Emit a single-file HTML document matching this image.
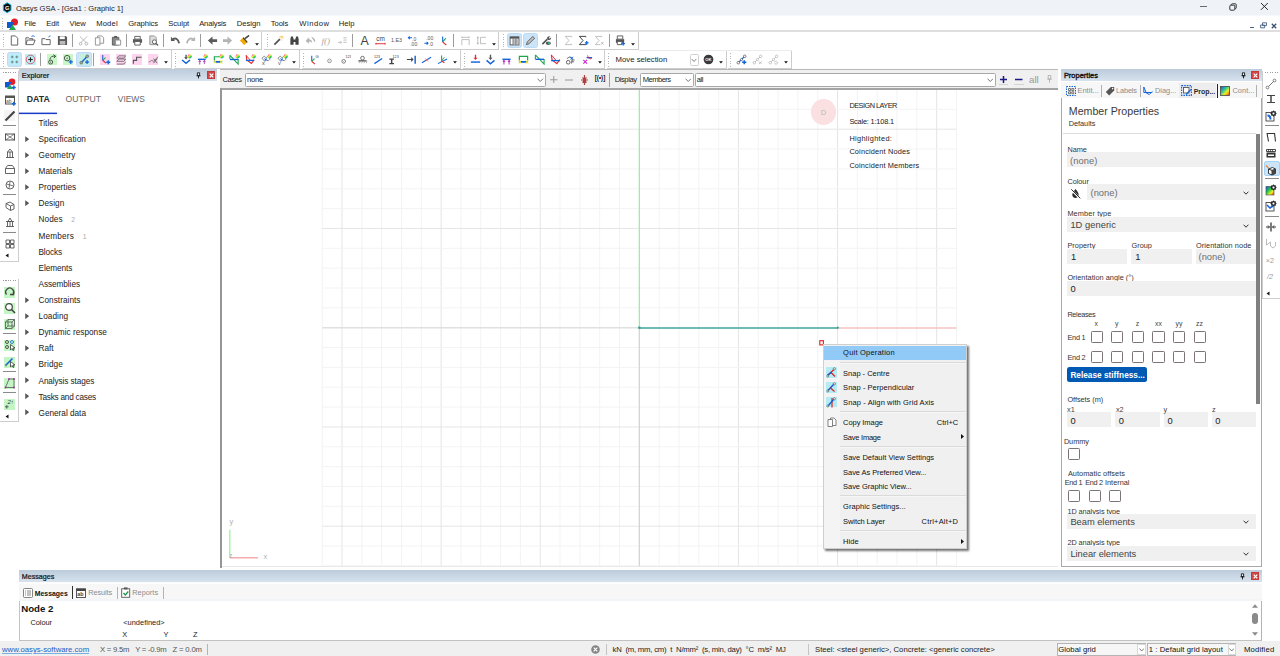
<!DOCTYPE html>
<html lang="en"><head><meta charset="utf-8"><title>Oasys GSA - [Gsa1 : Graphic 1]</title>
<style>
html,body{margin:0;padding:0;background:#fff;}
body{width:1280px;height:656px;position:relative;overflow:hidden;font-family:"Liberation Sans",sans-serif;}
.b{position:absolute;display:block;}
.t{position:absolute;display:block;white-space:nowrap;}
</style></head>
<body>
<svg width="0" height="0" style="position:absolute"><defs><linearGradient id="rb" x1="0" y1="0" x2="1" y2="1"><stop offset=".15" stop-color="#f4c"/><stop offset=".4" stop-color="#fe3"/><stop offset=".62" stop-color="#3d4"/><stop offset=".9" stop-color="#26f"/></linearGradient></defs></svg>
<!-- s_top -->
<div class="b" style="left:0.00px;top:0.00px;width:1280.00px;height:15.00px;background:#eff3f8;"></div>
<div class="b" style="left:0.00px;top:15.00px;width:1280.00px;height:1.00px;background:#f6f8fb;"></div>
<svg class="b" style="left:1.60px;top:2.20px;" width="10.4" height="11.4" viewBox="0 0 13 15"><path d="M6.500 1l5 3v7l-5 3-5-3v-7z" fill="#0a0a0a" stroke="#16b4e0" stroke-width="1.300"/><text x="6.500" y="10.300" font-size="7.500" font-weight="bold" text-anchor="middle" font-family="Liberation Sans,sans-serif" fill="#fff">G</text></svg>
<span class="t" style="left:16.00px;top:2.60px;font-size:7.57px;line-height:12px;height:12px;color:#1c1c1c;">Oasys GSA - [Gsa1 : Graphic 1]</span>
<div class="b" style="left:1199.80px;top:6.10px;width:7.40px;height:1.20px;background:#6a6a6a;"></div>
<svg class="b" style="left:1229.40px;top:2.60px;" width="8" height="8" viewBox="0 0 8 8"><rect x=".8" y="2.200" width="5" height="5" rx="1" fill="none" stroke="#333" stroke-width="1"/><path d="M2.400 2v-.4q0-.8 .8-.8h3.200q.8 0 .8 .8v3.200q0 .8-.8 .8h-.4" fill="none" stroke="#333" stroke-width="1"/></svg>
<svg class="b" style="left:1259.60px;top:2.00px;" width="8.8" height="8.8" viewBox="0 0 9 9"><path d="M1 1l7 7M8 1l-7 7" stroke="#222" stroke-width="1"/></svg>
<div class="b" style="left:0.00px;top:16.00px;width:1280.00px;height:14.50px;background:#fff;"></div>
<div class="b" style="left:0.00px;top:30.30px;width:1280.00px;height:1.60px;background:#dedede;"></div>
<div class="b" style="left:1.80px;top:18.00px;width:1.00px;height:11.00px;background:repeating-linear-gradient(#b4b4b4 0 1px,transparent 1px 2.5px);"></div>
<svg class="b" style="left:5.50px;top:17.50px;" width="13" height="13" viewBox="0 0 13 13"><circle cx="8.500" cy="4" r="3.500" fill="#e0202a"/><path d="M1 4h7l-3 6h-4z" fill="#1458d0"/><path d="M3 12l3.500-5.500 3.500 5.500z" fill="#1ea850"/></svg>
<span class="t" style="left:24.20px;top:17.90px;font-size:7.63px;line-height:12px;height:12px;color:#1a1a1a;letter-spacing:-0.174px;">File</span>
<span class="t" style="left:46.20px;top:17.90px;font-size:7.63px;line-height:12px;height:12px;color:#1a1a1a;letter-spacing:-0.087px;">Edit</span>
<span class="t" style="left:69.50px;top:17.90px;font-size:7.63px;line-height:12px;height:12px;color:#1a1a1a;letter-spacing:-0.026px;">View</span>
<span class="t" style="left:96.20px;top:17.90px;font-size:7.63px;line-height:12px;height:12px;color:#1a1a1a;letter-spacing:0.163px;">Model</span>
<span class="t" style="left:128.20px;top:17.90px;font-size:7.63px;line-height:12px;height:12px;color:#1a1a1a;letter-spacing:-0.092px;">Graphics</span>
<span class="t" style="left:168.20px;top:17.90px;font-size:7.63px;line-height:12px;height:12px;color:#1a1a1a;letter-spacing:-0.035px;">Sculpt</span>
<span class="t" style="left:199.20px;top:17.90px;font-size:7.63px;line-height:12px;height:12px;color:#1a1a1a;letter-spacing:-0.177px;">Analysis</span>
<span class="t" style="left:236.80px;top:17.90px;font-size:7.63px;line-height:12px;height:12px;color:#1a1a1a;letter-spacing:-0.009px;">Design</span>
<span class="t" style="left:270.80px;top:17.90px;font-size:7.63px;line-height:12px;height:12px;color:#1a1a1a;letter-spacing:-0.083px;">Tools</span>
<span class="t" style="left:299.20px;top:17.90px;font-size:7.63px;line-height:12px;height:12px;color:#1a1a1a;letter-spacing:0.526px;">Window</span>
<span class="t" style="left:338.80px;top:17.90px;font-size:7.63px;line-height:12px;height:12px;color:#1a1a1a;letter-spacing:0.001px;">Help</span>
<div class="b" style="left:1250.00px;top:26.60px;width:4.20px;height:1.10px;background:#4a6080;"></div>
<svg class="b" style="left:1259.60px;top:22.00px;" width="7" height="6.5" viewBox="0 0 7 6.500"><path d="M2.500 .8h4v2.800h-4zM.6 3h4v2.800h-4z" fill="#fff" stroke="#4a6080" stroke-width=".9"/></svg>
<svg class="b" style="left:1271.40px;top:22.80px;" width="6" height="6" viewBox="0 0 6 6"><path d="M.8 .8l4.400 4.400M5.200 .8l-4.400 4.400" stroke="#3a5070" stroke-width="1.300"/></svg>
<div class="b" style="left:0.00px;top:31.60px;width:1280.00px;height:38.40px;background:#fff;"></div>
<div class="b" style="left:0.00px;top:31.60px;width:262.00px;height:18.20px;background:#fff;border-right:1px solid #cdcdcd;border-bottom:1px solid #cdcdcd;box-sizing:border-box;"></div>
<div class="b" style="left:264.00px;top:31.60px;width:235.00px;height:18.20px;background:#fff;border-right:1px solid #cdcdcd;border-bottom:1px solid #cdcdcd;box-sizing:border-box;"></div>
<div class="b" style="left:501.00px;top:31.60px;width:138.00px;height:18.20px;background:#fff;border-right:1px solid #cdcdcd;border-bottom:1px solid #cdcdcd;box-sizing:border-box;"></div>
<div class="b" style="left:0.00px;top:50.00px;width:172.00px;height:19.00px;background:#fff;border-right:1px solid #cdcdcd;border-bottom:1px solid #cdcdcd;box-sizing:border-box;"></div>
<div class="b" style="left:173.50px;top:50.00px;width:126.30px;height:19.00px;background:#fff;border-right:1px solid #cdcdcd;border-bottom:1px solid #cdcdcd;box-sizing:border-box;"></div>
<div class="b" style="left:301.50px;top:50.00px;width:159.00px;height:19.00px;background:#fff;border-right:1px solid #cdcdcd;border-bottom:1px solid #cdcdcd;box-sizing:border-box;"></div>
<div class="b" style="left:462.50px;top:50.00px;width:142.80px;height:19.00px;background:#fff;border-right:1px solid #cdcdcd;border-bottom:1px solid #cdcdcd;box-sizing:border-box;"></div>
<div class="b" style="left:606.80px;top:50.00px;width:119.80px;height:19.00px;background:#fff;border-right:1px solid #cdcdcd;border-bottom:1px solid #cdcdcd;box-sizing:border-box;"></div>
<div class="b" style="left:728.20px;top:50.00px;width:64.00px;height:19.00px;background:#fff;border-right:1px solid #cdcdcd;border-bottom:1px solid #cdcdcd;box-sizing:border-box;"></div>
<div class="b" style="left:639.00px;top:49.60px;width:153.20px;height:0.80px;background:#ececec;"></div>
<div class="b" style="left:2.50px;top:34.00px;width:1.00px;height:14.00px;background:repeating-linear-gradient(#b4b4b4 0 1px,transparent 1px 2.5px);"></div>
<svg class="b" style="left:9.00px;top:35.10px;" width="11" height="11" viewBox="0 0 12 12"><path d="M2.5 1h4.5l2.5 2.5v7.5h-7z" fill="#fff" stroke="#5a5a5a" stroke-width="1"/></svg>
<svg class="b" style="left:25.00px;top:35.10px;" width="11" height="11" viewBox="0 0 12 12"><path d="M1 10.5l1.5-5h8.5l-1.8 5zM1 10V3h3l1 1h3.5v1.5" fill="#fff" stroke="#5a5a5a" stroke-width="1"/><path d="M7 1.5q2-1.5 3.5.3" stroke="#1464dc" fill="none"/></svg>
<svg class="b" style="left:41.00px;top:35.10px;" width="11" height="11" viewBox="0 0 12 12"><path d="M1 4h3.5l1 1H10v5.5H1z" fill="#fff" stroke="#5a5a5a" stroke-width="1"/><path d="M8.5 2.5q0-1.500 1.800-1.5" stroke="#1464dc" fill="none"/></svg>
<svg class="b" style="left:57.00px;top:35.10px;" width="11" height="11" viewBox="0 0 12 12"><path d="M1 1h8.500l1.500 1.500v8.500h-10z" fill="#5a5a5a"/><rect x="3" y="1.5" width="5.5" height="3" fill="#fff"/><rect x="3" y="6.500" width="6" height="4" fill="#bbb"/></svg>
<div class="b" style="left:72.00px;top:34.10px;width:1.00px;height:13.00px;background:#9c9c9c;"></div>
<svg class="b" style="left:78.00px;top:35.10px;" width="11" height="11" viewBox="0 0 12 12"><path d="M2 1.500l7 7M10 1.500l-7 7" stroke="#b4b4b4" stroke-width="1" fill="none"/><circle cx="2.8" cy="9.500" r="1.500" fill="none" stroke="#b4b4b4"/><circle cx="9.200" cy="9.500" r="1.500" fill="none" stroke="#b4b4b4"/></svg>
<svg class="b" style="left:94.00px;top:35.10px;" width="11" height="11" viewBox="0 0 12 12"><path d="M1.5 3h5v8h-5zM4 3V1h4.500l2 2v6h-4" fill="#fff" stroke="#909090" stroke-width="1"/></svg>
<svg class="b" style="left:110.50px;top:35.10px;" width="11" height="11" viewBox="0 0 12 12"><path d="M1.500 2.500h7v8.500h-7z" fill="#888" stroke="#5a5a5a"/><rect x="3.500" y="1" width="3" height="2" fill="#5a5a5a"/><path d="M5 5.500h5.500v5.500h-5.500z" fill="#fff" stroke="#909090"/></svg>
<div class="b" style="left:125.50px;top:34.10px;width:1.00px;height:13.00px;background:#9c9c9c;"></div>
<svg class="b" style="left:131.50px;top:35.10px;" width="11" height="11" viewBox="0 0 12 12"><path d="M1 4.500h10v4h-10z" fill="#5a5a5a"/><path d="M3 1.500h6v3h-6zM3 7h6v4h-6z" fill="#fff" stroke="#5a5a5a"/></svg>
<svg class="b" style="left:147.50px;top:35.10px;" width="11" height="11" viewBox="0 0 12 12"><path d="M2 1h5l2 2v7.500h-7z" fill="#ddd" stroke="#909090"/><circle cx="7" cy="7.500" r="2.200" fill="#fff" stroke="#5a5a5a"/><path d="M8.700 9.200l2.300 2.300" stroke="#5a5a5a" stroke-width="1.300"/></svg>
<div class="b" style="left:163.00px;top:34.10px;width:1.00px;height:13.00px;background:#9c9c9c;"></div>
<svg class="b" style="left:169.50px;top:35.10px;" width="11" height="11" viewBox="0 0 12 12"><path d="M1 2v4.500h4.500z" fill="#5a5a5a"/><path d="M3 4.500q5-2.500 7 4.500" stroke="#5a5a5a" stroke-width="2" fill="none"/></svg>
<svg class="b" style="left:185.00px;top:35.10px;" width="11" height="11" viewBox="0 0 12 12"><path d="M11 2v4.500h-4.500z" fill="#b4b4b4"/><path d="M9 4.500q-5-2.500-7 4.500" stroke="#b4b4b4" stroke-width="2" fill="none"/></svg>
<div class="b" style="left:200.00px;top:34.10px;width:1.00px;height:13.00px;background:#9c9c9c;"></div>
<svg class="b" style="left:206.50px;top:35.10px;" width="11" height="11" viewBox="0 0 12 12"><path d="M1 6l5-4.500v3h5v3h-5v3z" fill="#5a5a5a"/></svg>
<svg class="b" style="left:222.00px;top:35.10px;" width="11" height="11" viewBox="0 0 12 12"><path d="M11 6l-5-4.500v3h-5v3h5v3z" fill="#b4b4b4"/></svg>
<svg class="b" style="left:238.50px;top:35.10px;" width="11" height="11" viewBox="0 0 12 12"><path d="M1 6l4-3.500 4.500 5-4 3.500z" fill="#f5a800"/><path d="M6.500 4l4.500-3.500" stroke="#444" stroke-width="1.800"/><path d="M4.500 3l4.500 5" stroke="#444" stroke-width="1.300"/></svg>
<svg class="b" style="left:252.50px;top:37.60px;" width="8" height="8" viewBox="0 0 12 12"><path d="M3.200 7.800h5.600l-2.800 3.400z" fill="#111"/></svg>
<div class="b" style="left:267.00px;top:34.00px;width:1.00px;height:14.00px;background:repeating-linear-gradient(#b4b4b4 0 1px,transparent 1px 2.5px);"></div>
<svg class="b" style="left:273.00px;top:35.10px;" width="11" height="11" viewBox="0 0 12 12"><path d="M1.500 10.500l6-6" stroke="#555" stroke-width="2"/><path d="M9 1v2M9 5v1M7 3.300h1M10 3.300h1.500M10 2l1-1M7.500 1.500l.7.700" stroke="#f5a800" stroke-width=".9"/></svg>
<svg class="b" style="left:289.00px;top:35.10px;" width="11" height="11" viewBox="0 0 12 12"><path d="M1.500 3.500h3.500v7h-3.500zM7 3.500h3.500v7h-3.500zM5 5h2v2.500h-2zM2 1.500h2.500v2h-2.500zM7.500 1.500h2.500v2h-2.500z" fill="#444"/></svg>
<svg class="b" style="left:305.00px;top:35.10px;" width="11" height="11" viewBox="0 0 12 12"><path d="M1 6.500l3-3.500v2q3-.5 3.500 3-1.500-1.500-3.500-1v2zM7 2.500q4 .5 4 5l-1.500-1.500" fill="#b4b4b4" stroke="#b4b4b4" stroke-width=".6"/></svg>
<svg class="b" style="left:321.00px;top:35.10px;" width="11" height="11" viewBox="0 0 12 12"><text x="0.500" y="9.500" font-size="10" font-style="italic" font-family="Liberation Serif,serif" fill="#a8a8a8">f()</text></svg>
<svg class="b" style="left:337.00px;top:35.10px;" width="11" height="11" viewBox="0 0 12 12"><path d="M1 8h4M3.500 6.500l1.500 1.500-1.500 1.500" fill="none" stroke="#b4b4b4" stroke-width=".9"/><path d="M7 3h3.500M7 5.500h3.500M7 8h3.500" stroke="#b4b4b4" stroke-width=".9"/></svg>
<div class="b" style="left:352.00px;top:34.10px;width:1.00px;height:13.00px;background:#9c9c9c;"></div>
<svg class="b" style="left:358.50px;top:35.10px;" width="11" height="11" viewBox="0 0 12 12"><text x="6" y="11" font-size="13.500" text-anchor="middle" font-family="Liberation Sans,sans-serif" fill="#444">A</text></svg>
<svg class="b" style="left:374.50px;top:35.10px;" width="11" height="11" viewBox="0 0 12 12"><text x="6" y="6.500" font-size="7" text-anchor="middle" font-family="Liberation Sans,sans-serif" fill="#444">cm</text><path d="M1 9.500h10M1 8.500v2M11 8.500v2" stroke="#e0282e" stroke-width="1"/></svg>
<svg class="b" style="left:390.50px;top:35.10px;" width="11" height="11" viewBox="0 0 12 12"><text x="6" y="8" font-size="5.800" text-anchor="middle" font-family="Liberation Sans,sans-serif" fill="#555">1.E3</text></svg>
<svg class="b" style="left:406.50px;top:35.10px;" width="11" height="11" viewBox="0 0 12 12"><path d="M1.500 3h4M3 1.500l-1.500 1.500 1.500 1.500" fill="none" stroke="#1464dc" stroke-width="1.100"/><text x="5.500" y="6" font-size="5.500" font-family="Liberation Sans,sans-serif" fill="#555">.0</text><text x="3.500" y="11.500" font-size="5.500" font-family="Liberation Sans,sans-serif" fill="#555">.00</text></svg>
<svg class="b" style="left:422.50px;top:35.10px;" width="11" height="11" viewBox="0 0 12 12"><path d="M1.500 9h4M4 7.500l1.500 1.500-1.500 1.500" fill="none" stroke="#1464dc" stroke-width="1.100"/><text x="3.500" y="5.500" font-size="5.500" font-family="Liberation Sans,sans-serif" fill="#555">.00</text><text x="6.500" y="11.500" font-size="5.500" font-family="Liberation Sans,sans-serif" fill="#555">.0</text></svg>
<svg class="b" style="left:438.50px;top:35.10px;" width="11" height="11" viewBox="0 0 12 12"><path d="M4 1.500v6" stroke="#1464dc" stroke-width="1.200"/><path d="M4 7.500l3.500-4" stroke="#1ea84e" stroke-width="1.200"/><path d="M4 7.500l4 3.500" stroke="#e0282e" stroke-width="1.300"/></svg>
<div class="b" style="left:453.20px;top:34.10px;width:1.00px;height:13.00px;background:#9c9c9c;"></div>
<svg class="b" style="left:460.00px;top:35.10px;" width="11" height="11" viewBox="0 0 12 12"><path d="M2 5h8v6M2 5v6M2 2.500h8M2 1.500v2M10 1.500v2" fill="none" stroke="#b4b4b4" stroke-width=".9"/></svg>
<svg class="b" style="left:475.50px;top:35.10px;" width="11" height="11" viewBox="0 0 12 12"><path d="M5 2.500h6M5 9.500h6M5 2.500v7M2 2v8M1 3.500l1-1.500 1 1.500M1 8.500l1 1.500 1-1.500" fill="none" stroke="#b4b4b4" stroke-width=".9"/></svg>
<svg class="b" style="left:489.70px;top:37.60px;" width="8" height="8" viewBox="0 0 12 12"><path d="M3.200 7.800h5.600l-2.800 3.400z" fill="#111"/></svg>
<div class="b" style="left:503.00px;top:34.00px;width:1.00px;height:14.00px;background:repeating-linear-gradient(#b4b4b4 0 1px,transparent 1px 2.5px);"></div>
<div class="b" style="left:506.80px;top:32.90px;width:15.40px;height:15.40px;background:#cce4f7;border:1px solid #bcdcf6;border-radius:2.500px;box-sizing:border-box;"></div>
<div class="b" style="left:522.80px;top:32.90px;width:15.40px;height:15.40px;background:#cce4f7;border:1px solid #bcdcf6;border-radius:2.500px;box-sizing:border-box;"></div>
<svg class="b" style="left:509.00px;top:35.10px;" width="11" height="11" viewBox="0 0 12 12"><rect x="1.200" y="2" width="9.600" height="8.800" fill="#fff" stroke="#555" stroke-width="1"/><rect x="1.200" y="2" width="9.600" height="2" fill="#555"/><rect x="4.300" y="4.500" width="6" height="5.800" fill="#bdbdbd"/><path d="M4.300 4v7M7.500 4v7" stroke="#666" stroke-width=".8"/></svg>
<svg class="b" style="left:525.00px;top:35.10px;" width="11" height="11" viewBox="0 0 12 12"><path d="M1.500 10.500l1-3 6-6 2 2-6 6z" fill="#bbb" stroke="#555" stroke-width=".9"/></svg>
<svg class="b" style="left:541.00px;top:35.10px;" width="11" height="11" viewBox="0 0 12 12"><path d="M1.500 10l5.500-5.500" stroke="#555" stroke-width="1.800"/><path d="M6.500 3.500a2.500 2.500 0 0 1 3.500-2l-1.500 1.500 1 1 1.500-1.500a2.500 2.500 0 0 1-3 3z" fill="#555"/><ellipse cx="8" cy="9" rx="2.800" ry="2" fill="#555"/><circle cx="8.800" cy="9" r="1.200" fill="#2c8"/></svg>
<div class="b" style="left:555.50px;top:34.10px;width:1.00px;height:13.00px;background:#9c9c9c;"></div>
<svg class="b" style="left:562.50px;top:35.10px;" width="11" height="11" viewBox="0 0 12 12"><path d="M9.500 2.500v-1h-7l4 4.500-4 4.500h7v-1" fill="none" stroke="#b4b4b4" stroke-width=".9"/></svg>
<svg class="b" style="left:578.30px;top:35.10px;" width="11" height="11" viewBox="0 0 12 12"><path d="M8.500 2.500v-1h-7l4 4.500-4 4.500h7v-1" fill="none" stroke="#333" stroke-width="1"/><path d="M7.5 8.5h4M9.5 6.5v4" stroke="#1464dc" stroke-width="1.4" fill="none"/></svg>
<svg class="b" style="left:594.00px;top:35.10px;" width="11" height="11" viewBox="0 0 12 12"><path d="M8.500 2.500v-1h-7l4 4.500-4 4.500h5" fill="none" stroke="#b4b4b4" stroke-width=".9"/><path d="M7.500 7.500l3 3M10.500 7.500l-3 3" stroke="#b4b4b4" stroke-width=".9"/></svg>
<div class="b" style="left:609.10px;top:34.10px;width:1.00px;height:13.00px;background:#9c9c9c;"></div>
<svg class="b" style="left:615.00px;top:35.10px;" width="11" height="11" viewBox="0 0 12 12"><path d="M1 4.500h9v4h-9z" fill="#555"/><path d="M2.500 1h6v3.500h-6zM2.500 7h5v3.500h-5z" fill="#fff" stroke="#555"/><path d="M7 9.5h4M9 7.5v4" stroke="#1464dc" stroke-width="1.4" fill="none"/></svg>
<svg class="b" style="left:629.30px;top:37.60px;" width="8" height="8" viewBox="0 0 12 12"><path d="M3.200 7.800h5.600l-2.800 3.400z" fill="#111"/></svg>
<div class="b" style="left:2.50px;top:52.50px;width:1.00px;height:14.00px;background:repeating-linear-gradient(#b4b4b4 0 1px,transparent 1px 2.5px);"></div>
<div class="b" style="left:6.80px;top:51.70px;width:15.40px;height:15.40px;background:#cce4f7;border:1px solid #bcdcf6;border-radius:2.500px;box-sizing:border-box;"></div>
<div class="b" style="left:76.30px;top:51.70px;width:15.40px;height:15.40px;background:#cce4f7;border:1px solid #bcdcf6;border-radius:2.500px;box-sizing:border-box;"></div>
<div class="b" style="left:9.10px;top:54.10px;width:10.80px;height:10.60px;background:#b8f0f8;"></div><svg class="b" style="left:9.00px;top:53.90px;" width="11" height="11" viewBox="0 0 12 12"><path d="M2 3.200h3M3.500 1.700v3M7 3.200h3M8.500 1.700v3M2 8.700h3M3.500 7.200v3M7 8.700h3M8.500 7.200v3" stroke="#5a6a6a" stroke-width=".8"/></svg>
<div class="b" style="left:25.10px;top:54.10px;width:10.80px;height:10.60px;background:#b8f0f8;"></div><svg class="b" style="left:25.00px;top:53.90px;" width="11" height="11" viewBox="0 0 12 12"><circle cx="6" cy="6" r="4.700" fill="none" stroke="#e25060" stroke-width="1"/><path d="M3.500 6h5M6 3.500v5" stroke="#222" stroke-width="1.200"/></svg>
<div class="b" style="left:39.50px;top:52.90px;width:1.00px;height:13.00px;background:#9c9c9c;"></div>
<div class="b" style="left:46.60px;top:54.10px;width:10.80px;height:10.60px;background:#c8f8c8;"></div><svg class="b" style="left:46.50px;top:53.90px;" width="11" height="11" viewBox="0 0 12 12"><circle cx="4" cy="8.800" r="2.200" fill="none" stroke="#333" stroke-width=".9"/><circle cx="4" cy="8.800" r=".6" fill="#333"/><path d="M3 6q1-4.500 6-3.500M7 .8l2.500 1.700-2 2" fill="none" stroke="#333" stroke-width=".9"/></svg>
<div class="b" style="left:62.60px;top:54.10px;width:10.80px;height:10.60px;background:#c8f8c8;"></div><svg class="b" style="left:62.50px;top:53.90px;" width="11" height="11" viewBox="0 0 12 12"><circle cx="4.500" cy="4.500" r="3" fill="none" stroke="#333" stroke-width=".9"/><circle cx="4.500" cy="4.500" r=".7" fill="#333"/><path d="M6.2 8.5h4.6M8.5 6.2v4.6" stroke="#1464dc" stroke-width="1.4" fill="none"/></svg>
<div class="b" style="left:78.60px;top:54.10px;width:10.80px;height:10.60px;background:#c4f0e0;"></div><svg class="b" style="left:78.50px;top:53.90px;" width="11" height="11" viewBox="0 0 12 12"><path d="M3 9l5.500-6" stroke="#1464dc" stroke-width="1.500"/><circle cx="2.500" cy="9.500" r="1.500" fill="#9ab09a" stroke="#666" stroke-width=".8"/><circle cx="9" cy="2.500" r="1.500" fill="#9ab09a" stroke="#666" stroke-width=".8"/><path d="M6.6 8.8h4.4M8.8 6.6v4.4" stroke="#1464dc" stroke-width="1.4" fill="none"/></svg>
<div class="b" style="left:93.00px;top:52.90px;width:1.00px;height:13.00px;background:#9c9c9c;"></div>
<div class="b" style="left:99.60px;top:54.10px;width:10.80px;height:10.60px;background:#fdd4ee;"></div><svg class="b" style="left:99.50px;top:53.90px;" width="11" height="11" viewBox="0 0 12 12"><path d="M3 1v6" stroke="#1464dc" stroke-width="1.200"/><path d="M3 7l3-3" stroke="#1ea84e" stroke-width="1.200"/><path d="M3 7l3.500 3" stroke="#e0282e" stroke-width="1.300"/><path d="M6.8 9h4.4M9 6.8v4.4" stroke="#1464dc" stroke-width="1.4" fill="none"/></svg>
<div class="b" style="left:115.60px;top:54.10px;width:10.80px;height:10.60px;background:#fdd4ee;"></div><svg class="b" style="left:115.50px;top:53.90px;" width="11" height="11" viewBox="0 0 12 12"><path d="M3 2h7.500l-2 2.500h-7.500zM3 5.500h7.500l-2 2.500h-7.500zM1 11h7.500l2-2.500" fill="none" stroke="#555" stroke-width=".8"/></svg>
<div class="b" style="left:131.60px;top:54.10px;width:10.80px;height:10.60px;background:#fdd4ee;"></div><svg class="b" style="left:131.50px;top:53.90px;" width="11" height="11" viewBox="0 0 12 12"><path d="M1.500 10.500v-3.500h3.500v-3.500h5.500" fill="none" stroke="#555" stroke-width="1.200"/></svg>
<div class="b" style="left:147.60px;top:54.10px;width:10.80px;height:10.60px;background:#fdd4ee;"></div><svg class="b" style="left:147.50px;top:53.90px;" width="11" height="11" viewBox="0 0 12 12"><path d="M1 9l3-2 2 1 5-5" fill="none" stroke="#777" stroke-width="1"/><path d="M6 5l4 5M10 5l-4 5" stroke="#555" stroke-width=".9"/></svg>
<svg class="b" style="left:161.50px;top:56.40px;" width="8" height="8" viewBox="0 0 12 12"><path d="M3.200 7.800h5.600l-2.800 3.400z" fill="#111"/></svg>
<div class="b" style="left:175.20px;top:52.50px;width:1.00px;height:14.00px;background:repeating-linear-gradient(#b4b4b4 0 1px,transparent 1px 2.5px);"></div>
<svg class="b" style="left:180.50px;top:53.90px;" width="11" height="11" viewBox="0 0 12 12"><path d="M5.500 .8v3.500" stroke="#555" stroke-width="1.500"/><path d="M3.300 3.600h4.400l-2.200 2.400z" fill="#555"/><path d="M1.200 6.500l4.300 3.700 4.300-3.700" fill="none" stroke="#1464dc" stroke-width="1.600"/><circle cx="9.4" cy="2.7" r="2.3" fill="url(#rb)"/></svg>
<svg class="b" style="left:196.50px;top:53.90px;" width="11" height="11" viewBox="0 0 12 12"><path d="M1 5.800h8.500" stroke="#1464dc" stroke-width="1.500"/><path d="M3 7v4.500M8 7v4M1.800 8.500l1.200-1.500 1.200 1.500M6.800 8.500l1.200-1.500 1.200 1.500" fill="none" stroke="#a3a" stroke-width="1"/><circle cx="9.4" cy="2.7" r="2.3" fill="url(#rb)"/></svg>
<svg class="b" style="left:212.50px;top:53.90px;" width="11" height="11" viewBox="0 0 12 12"><path d="M1.500 7v-4h6.500" fill="none" stroke="#1ea84e" stroke-width="1.300"/><path d="M1 8.500h9" stroke="#1464dc" stroke-width="1.700"/><path d="M1 6.800l2.500 3.600M3.500 6.800l-2.500 3.600M7.500 6.800l2.500 3.600M10 6.800l-2.500 3.600" stroke="#ee2" stroke-width="1"/><path d="M3.800 8.500h3.400" stroke="#1464dc" stroke-width="1.700"/><circle cx="9.4" cy="2.7" r="2.3" fill="url(#rb)"/></svg>
<svg class="b" style="left:228.50px;top:53.90px;" width="11" height="11" viewBox="0 0 12 12"><path d="M1 1.500l9 9.500v-5.500" fill="none" stroke="#1ea84e" stroke-width="1.200"/><path d="M1 1.500v4" stroke="#1ea84e" stroke-width="1.200"/><path d="M1 6h9" stroke="#1464dc" stroke-width="1.500"/><circle cx="9.4" cy="2.7" r="2.3" fill="url(#rb)"/></svg>
<svg class="b" style="left:244.50px;top:53.90px;" width="11" height="11" viewBox="0 0 12 12"><path d="M1.300 1.500l.7 5 5 3.800 3-4" fill="none" stroke="#e0282e" stroke-width="1.200"/><path d="M1.300 1.500l5 6" stroke="#e0282e" stroke-width="1"/><path d="M1 7h9" stroke="#1464dc" stroke-width="1.500"/><circle cx="9.4" cy="2.7" r="2.3" fill="url(#rb)"/></svg>
<svg class="b" style="left:260.50px;top:53.90px;" width="11" height="11" viewBox="0 0 12 12"><path d="M1 4.500l2.500-2 2 1.500 2.500-1.500 2 3-2 2-2-1-2 1.500z" fill="none" stroke="#666" stroke-width=".8"/><path d="M3.500 5l3.500 2M6 4.500l-2 3" stroke="#1464dc" stroke-width=".9"/><text x="1" y="12" font-size="6" font-family="Liberation Sans,sans-serif" fill="#444">x</text><circle cx="9.4" cy="2.7" r="2.3" fill="url(#rb)"/></svg>
<svg class="b" style="left:276.50px;top:53.90px;" width="11" height="11" viewBox="0 0 12 12"><path d="M1 4.500l2.500-2 2 1.500 2.500-1.500 2 3-2 2-2-1-2 1.500z" fill="none" stroke="#666" stroke-width=".8"/><path d="M3.500 5l3.500 2M6 4.500l-2 3" stroke="#1464dc" stroke-width=".9"/><text x="1" y="11.500" font-size="6" font-family="Liberation Sans,sans-serif" fill="#444">y</text><circle cx="9.4" cy="2.7" r="2.3" fill="url(#rb)"/></svg>
<svg class="b" style="left:290.00px;top:56.40px;" width="8" height="8" viewBox="0 0 12 12"><path d="M3.200 7.800h5.600l-2.800 3.400z" fill="#111"/></svg>
<div class="b" style="left:303.00px;top:52.50px;width:1.00px;height:14.00px;background:repeating-linear-gradient(#b4b4b4 0 1px,transparent 1px 2.5px);"></div>
<svg class="b" style="left:308.90px;top:53.90px;" width="11" height="11" viewBox="0 0 12 12"><path d="M3 2v6" stroke="#1464dc" stroke-width="1.200"/><path d="M3 8l3-3" stroke="#1ea84e" stroke-width="1.200"/><path d="M3 8l3.500 3" stroke="#e0282e" stroke-width="1.300"/><text x="7" y="4.500" font-size="4.500" font-family="Liberation Sans,sans-serif" fill="#333">G</text></svg>
<svg class="b" style="left:323.90px;top:53.90px;" width="11" height="11" viewBox="0 0 12 12"><circle cx="6" cy="7.500" r="2" fill="none" stroke="#777" stroke-width=".8"/><circle cx="6" cy="7.500" r=".5" fill="#777"/></svg>
<svg class="b" style="left:340.10px;top:53.90px;" width="11" height="11" viewBox="0 0 12 12"><circle cx="4" cy="8" r="2" fill="none" stroke="#555" stroke-width=".8"/><circle cx="4" cy="8" r=".5" fill="#555"/><text x="6" y="4.500" font-size="4" font-family="Liberation Sans,sans-serif" fill="#444">123</text></svg>
<svg class="b" style="left:357.00px;top:53.90px;" width="11" height="11" viewBox="0 0 12 12"><circle cx="6" cy="4.500" r="2" fill="none" stroke="#555" stroke-width=".9"/><path d="M1.500 7.500h9" stroke="#444" stroke-width="1.300"/><path d="M2.500 10l1-2M5 10l1-2M7.500 10l1-2M10 10l1-2" stroke="#888" stroke-width=".7"/></svg>
<svg class="b" style="left:373.30px;top:53.90px;" width="11" height="11" viewBox="0 0 12 12"><path d="M1.500 10.500l8.500-5.500" stroke="#1464dc" stroke-width="1.300"/><text x="1" y="4" font-size="4" font-family="Liberation Sans,sans-serif" fill="#444">123</text></svg>
<svg class="b" style="left:388.30px;top:53.90px;" width="11" height="11" viewBox="0 0 12 12"><path d="M1.500 5.500h5M1.500 10.500h5" stroke="#444" stroke-width="1.300"/><path d="M4 5.500v5" stroke="#444" stroke-width="1.600"/><text x="5" y="4" font-size="4" font-family="Liberation Sans,sans-serif" fill="#444">123</text></svg>
<svg class="b" style="left:406.10px;top:53.90px;" width="11" height="11" viewBox="0 0 12 12"><path d="M1 6h6.500M5.500 4l2 2-2 2" fill="none" stroke="#444" stroke-width="1.100"/><path d="M10 2v8.500" stroke="#1464dc" stroke-width="1.600"/></svg>
<svg class="b" style="left:421.00px;top:53.90px;" width="11" height="11" viewBox="0 0 12 12"><path d="M1 9.500l10-6" stroke="#1464dc" stroke-width="1.200"/><path d="M5 5l2.500 3M7.500 5l-2.500 3" stroke="#e66" stroke-width=".9"/></svg>
<svg class="b" style="left:437.00px;top:53.90px;" width="11" height="11" viewBox="0 0 12 12"><path d="M5 1.500v6" stroke="#1ea84e" stroke-width="1.200"/><path d="M5 7.500l3-4" stroke="#1ea84e" stroke-width="1"/><path d="M1 10.500l10-5" stroke="#1464dc" stroke-width="1.200"/><path d="M5 7.500l3 2" stroke="#e0282e" stroke-width="1.200"/></svg>
<svg class="b" style="left:451.00px;top:56.40px;" width="8" height="8" viewBox="0 0 12 12"><path d="M3.200 7.800h5.600l-2.800 3.400z" fill="#111"/></svg>
<div class="b" style="left:464.00px;top:52.50px;width:1.00px;height:14.00px;background:repeating-linear-gradient(#b4b4b4 0 1px,transparent 1px 2.5px);"></div>
<svg class="b" style="left:469.50px;top:53.90px;" width="11" height="11" viewBox="0 0 12 12"><path d="M6 .8v4" stroke="#e0282e" stroke-width="1.400"/><path d="M3.800 4.200h4.400l-2.200 2.400z" fill="#e0282e"/><path d="M1 8.800h10" stroke="#1464dc" stroke-width="1.600"/></svg>
<svg class="b" style="left:485.10px;top:53.90px;" width="11" height="11" viewBox="0 0 12 12"><path d="M6 .8v4" stroke="#555" stroke-width="1.500"/><path d="M3.800 4.200h4.400l-2.200 2.400z" fill="#555"/><path d="M1.700 7l4.300 3.700 4.300-3.700" fill="none" stroke="#1464dc" stroke-width="1.600"/></svg>
<svg class="b" style="left:501.40px;top:53.90px;" width="11" height="11" viewBox="0 0 12 12"><path d="M1.500 5.800h9" stroke="#1464dc" stroke-width="1.600"/><path d="M3.200 7v4.500M8.800 7v4.500M2 8.500l1.200-1.500 1.200 1.500M7.600 8.500l1.200-1.500 1.200 1.500" fill="none" stroke="#b3b" stroke-width="1.100"/></svg>
<svg class="b" style="left:518.30px;top:53.90px;" width="11" height="11" viewBox="0 0 12 12"><path d="M1.500 7v-4.500h9v4.500" fill="none" stroke="#1ea84e" stroke-width="1.300"/><path d="M1 8.500h10" stroke="#1464dc" stroke-width="1.700"/><path d="M1 6.800l2.500 3.800M3.500 6.800l-2.500 3.800M8.500 6.800l2.500 3.800M11 6.800l-2.500 3.800" stroke="#ee2" stroke-width="1"/><path d="M3.800 8.500h4.400" stroke="#1464dc" stroke-width="1.700"/></svg>
<svg class="b" style="left:534.30px;top:53.90px;" width="11" height="11" viewBox="0 0 12 12"><path d="M1.500 1l9.500 10v-5.500" fill="none" stroke="#1ea84e" stroke-width="1.200"/><path d="M1.500 1v4.500" stroke="#1ea84e" stroke-width="1.200"/><path d="M1.500 5.800h9.500" stroke="#1464dc" stroke-width="1.500"/></svg>
<svg class="b" style="left:550.10px;top:53.90px;" width="11" height="11" viewBox="0 0 12 12"><path d="M1.500 1l.8 5.500 5.200 4 3.300-4.300" fill="none" stroke="#e0282e" stroke-width="1.200"/><path d="M1.500 1l5.500 6.500" stroke="#e0282e" stroke-width="1"/><path d="M1.200 7.200h9.600" stroke="#1464dc" stroke-width="1.500"/></svg>
<svg class="b" style="left:565.10px;top:53.90px;" width="11" height="11" viewBox="0 0 12 12"><circle cx="3.500" cy="9" r="2" fill="none" stroke="#444" stroke-width=".9"/><path d="M2 5q3-3 6-1M7 6.500h3.500M7 8.500h3M8 5.500l-1 5" fill="none" stroke="#444" stroke-width=".8"/><path d="M5 3.500l4 2M9 3l-3 3" stroke="#1464dc" stroke-width=".9"/></svg>
<svg class="b" style="left:582.00px;top:53.90px;" width="11" height="11" viewBox="0 0 12 12"><path d="M1.500 6.500l4 4M5.500 6.500l-4 4" stroke="#c2c" stroke-width="1.200"/><path d="M5 4h6" stroke="#1464dc" stroke-width="1.500"/><path d="M6 1.500l1 2.500 2.500 1.500 1-1.500" fill="none" stroke="#e0282e" stroke-width=".9"/></svg>
<svg class="b" style="left:596.00px;top:56.40px;" width="8" height="8" viewBox="0 0 12 12"><path d="M3.200 7.800h5.600l-2.800 3.400z" fill="#111"/></svg>
<div class="b" style="left:608.10px;top:52.50px;width:1.00px;height:14.00px;background:repeating-linear-gradient(#b4b4b4 0 1px,transparent 1px 2.5px);"></div>
<span class="t" style="left:615.60px;top:54.30px;font-size:7.74px;line-height:12px;height:12px;color:#1a1a1a;">Move selection</span>
<div class="b" style="left:689.80px;top:54.30px;width:8.80px;height:11.30px;background:#fff;border:1px solid #d0d0d0;border-radius:1.500px;box-sizing:border-box;"></div>
<svg class="b" style="left:691.20px;top:57.50px;" width="6" height="5" viewBox="0 0 6 5"><path d="M.7 1l2.300 2.500 2.300-2.500" fill="none" stroke="#666" stroke-width=".8"/></svg>
<svg class="b" style="left:703.40px;top:53.50px;" width="11" height="11" viewBox="0 0 12 12"><circle cx="6" cy="6" r="5.300" fill="#3a3a3a"/><text x="6" y="7.600" font-size="4.600" text-anchor="middle" font-weight="bold" font-family="Liberation Sans,sans-serif" fill="#fff">OK</text></svg>
<svg class="b" style="left:717.00px;top:56.40px;" width="8" height="8" viewBox="0 0 12 12"><path d="M3.200 7.800h5.600l-2.800 3.400z" fill="#111"/></svg>
<div class="b" style="left:730.00px;top:52.50px;width:1.00px;height:14.00px;background:repeating-linear-gradient(#b4b4b4 0 1px,transparent 1px 2.5px);"></div>
<svg class="b" style="left:735.90px;top:53.90px;" width="11" height="11" viewBox="0 0 12 12"><path d="M3 9l6-6" stroke="#1464dc" stroke-width="1.200"/><circle cx="2.500" cy="9.500" r="1.400" fill="#fff" stroke="#555" stroke-width=".8"/><circle cx="6" cy="6" r="1.200" fill="#fff" stroke="#555" stroke-width=".8"/><circle cx="9.500" cy="2.500" r="1.400" fill="#fff" stroke="#555" stroke-width=".8"/><path d="M6.7 9h4.6M9 6.7v4.6" stroke="#1464dc" stroke-width="1.6" fill="none"/></svg>
<svg class="b" style="left:752.30px;top:53.90px;" width="11" height="11" viewBox="0 0 12 12"><path d="M3 9l6-6" stroke="#b4b4b4" stroke-width=".9"/><circle cx="2.500" cy="9.500" r="1.400" fill="#fff" stroke="#b4b4b4" stroke-width=".8"/><circle cx="6" cy="6" r="1.200" fill="#fff" stroke="#b4b4b4" stroke-width=".8"/><circle cx="9.500" cy="2.500" r="1.400" fill="#fff" stroke="#b4b4b4" stroke-width=".8"/><path d="M7.500 8l3 3M10.500 8l-3 3" stroke="#b4b4b4" stroke-width=".9"/></svg>
<svg class="b" style="left:767.90px;top:53.90px;" width="11" height="11" viewBox="0 0 12 12"><path d="M3 9l6-6" stroke="#b4b4b4" stroke-width=".9"/><circle cx="2.500" cy="9.500" r="1.400" fill="#fff" stroke="#b4b4b4" stroke-width=".8"/><circle cx="6" cy="6" r="1.200" fill="#fff" stroke="#b4b4b4" stroke-width=".8"/><circle cx="9.500" cy="2.500" r="1.400" fill="#fff" stroke="#b4b4b4" stroke-width=".8"/><path d="M7 8.500q3-1.500 3.500 1.500l-1.500 1M9 11l-2-.5" fill="none" stroke="#b4b4b4" stroke-width=".9"/></svg>
<svg class="b" style="left:782.00px;top:56.40px;" width="8" height="8" viewBox="0 0 12 12"><path d="M3.200 7.800h5.600l-2.800 3.400z" fill="#111"/></svg>
<!-- s_left -->
<div class="b" style="left:0.00px;top:69.00px;width:1280.00px;height:572.00px;background:#fff;"></div>
<div class="b" style="left:0.00px;top:70.50px;width:18.80px;height:191.10px;background:#fff;border-right:1px solid #cdcdcd;border-bottom:1px solid #cdcdcd;box-sizing:border-box;"></div>
<div class="b" style="left:2.50px;top:72.00px;width:14.00px;height:1.00px;background:repeating-linear-gradient(90deg,#9a9a9a 0 1px,transparent 1px 2.500px);"></div>
<svg class="b" style="left:3.70px;top:78.00px;" width="12" height="12" viewBox="0 0 12 12"><circle cx="8" cy="3.800" r="3.300" fill="#e0202a"/><path d="M1 4h6.500l-3 5.500h-3.500z" fill="#1458d0"/><path d="M3 11l3-4.500 3 4.500z" fill="#1ea850"/><path d="M7.8 9.5h4M9.8 7.5v4" stroke="#1464dc" stroke-width="1.4" fill="none"/></svg>
<svg class="b" style="left:3.70px;top:94.00px;" width="12" height="12" viewBox="0 0 12 12"><rect x="1.500" y="2" width="9" height="8" fill="#fff" stroke="#555"/><rect x="1.500" y="2" width="9" height="2" fill="#555"/><text x="2" y="9" font-size="5" font-family="Liberation Sans,sans-serif" fill="#555">ab</text><path d="M7.8 9.8h4M9.8 7.8v4" stroke="#1464dc" stroke-width="1.4" fill="none"/></svg>
<div class="b" style="left:4.20px;top:110.00px;width:11.00px;height:11.00px;background:#f4f4f4;"></div><svg class="b" style="left:3.70px;top:109.50px;" width="12" height="12" viewBox="0 0 12 12"><path d="M1.500 10.500l9-9" stroke="#444" stroke-width="2.200"/></svg>
<div class="b" style="left:3.00px;top:125.00px;width:13.00px;height:1.00px;background:#8a8a8a;"></div>
<svg class="b" style="left:3.70px;top:131.00px;" width="12" height="12" viewBox="0 0 12 12"><rect x="1.500" y="3" width="9" height="6" fill="#fff" stroke="#555" stroke-width="1"/><path d="M1.500 3l4.500 3 4.500-3M1.500 9l4.500-3 4.500 3" fill="none" stroke="#555" stroke-width=".7"/></svg>
<svg class="b" style="left:3.70px;top:147.00px;" width="12" height="12" viewBox="0 0 12 12"><path d="M2 10.500h8M3.500 10.500v-5.500h5v5.500M3.500 5l2.500-3 2.500 3M6 5v5.500" fill="none" stroke="#555" stroke-width=".9"/></svg>
<svg class="b" style="left:3.70px;top:162.50px;" width="12" height="12" viewBox="0 0 12 12"><path d="M1.500 10.500h9v-5h-9zM1.500 5.500l2-3h5l2 3" fill="none" stroke="#555" stroke-width=".9"/></svg>
<svg class="b" style="left:3.70px;top:179.00px;" width="12" height="12" viewBox="0 0 12 12"><circle cx="6" cy="6" r="4" fill="none" stroke="#555" stroke-width=".9"/><path d="M2.500 5l7 2M6 2.500l-1 7" fill="none" stroke="#555" stroke-width=".8"/></svg>
<div class="b" style="left:3.00px;top:194.00px;width:13.00px;height:1.00px;background:#8a8a8a;"></div>
<svg class="b" style="left:3.70px;top:200.00px;" width="12" height="12" viewBox="0 0 12 12"><path d="M2 3.500l4-1.500 4 2.500v4.500l-3.500 1.500-4.500-3zM2 3.500l4.500 2.500 3.500-1.500M6.500 6v4.500" fill="none" stroke="#555" stroke-width=".9"/></svg>
<svg class="b" style="left:3.70px;top:216.00px;" width="12" height="12" viewBox="0 0 12 12"><path d="M2 10.500h8M3.500 10.500v-5h5v5M2 5.500h8M4 5.500l2-3.500 2 3.500M6 5.500v5" fill="none" stroke="#555" stroke-width=".9"/></svg>
<div class="b" style="left:3.00px;top:232.00px;width:13.00px;height:1.00px;background:#8a8a8a;"></div>
<svg class="b" style="left:3.70px;top:238.00px;" width="12" height="12" viewBox="0 0 12 12"><path d="M2 2h3.500v3.500h-3.500zM6.500 2h3.500v3.500h-3.500zM2 6.500h3.500v3.500h-3.500zM6.500 6.500h3.500v3.500h-3.500z" fill="#fff" stroke="#555" stroke-width=".9"/></svg>
<svg class="b" style="left:5.00px;top:253.00px;" width="4" height="5" viewBox="0 0 4 5"><path d="M3.500 .5v4l-3-2z" fill="#111"/></svg>
<div class="b" style="left:0.00px;top:278.50px;width:18.80px;height:143.10px;background:#fff;border-right:1px solid #cdcdcd;border-bottom:1px solid #cdcdcd;box-sizing:border-box;"></div>
<div class="b" style="left:2.50px;top:280.00px;width:14.00px;height:1.00px;background:repeating-linear-gradient(90deg,#9a9a9a 0 1px,transparent 1px 2.500px);"></div>
<div class="b" style="left:4.20px;top:286.50px;width:11.00px;height:11.00px;background:#c4f5c4;"></div><svg class="b" style="left:3.70px;top:286.00px;" width="12" height="12" viewBox="0 0 12 12"><path d="M2.500 8.500a4 4 0 1 1 6 .5" fill="none" stroke="#444" stroke-width="1.300"/><path d="M6 8.500h3.500v-3" fill="none" stroke="#444" stroke-width="1.300"/></svg>
<div class="b" style="left:4.20px;top:302.50px;width:11.00px;height:11.00px;background:#c4f5c4;"></div><svg class="b" style="left:3.70px;top:302.00px;" width="12" height="12" viewBox="0 0 12 12"><circle cx="5" cy="5" r="3.300" fill="#fff" stroke="#444" stroke-width="1.200"/><path d="M7.500 7.500l3.500 3.500" stroke="#444" stroke-width="1.600"/></svg>
<div class="b" style="left:4.20px;top:318.50px;width:11.00px;height:11.00px;background:#c4f5c4;"></div><svg class="b" style="left:3.70px;top:318.00px;" width="12" height="12" viewBox="0 0 12 12"><path d="M1.500 4h6.500v6.500h-6.500zM4 1.500h6.500v6.500h-6.500zM1.500 4l2.500-2.500M8 4l2.500-2.500M1.500 10.500l2.500-2.500M8 10.500l2.500-2.500" fill="none" stroke="#555" stroke-width=".8"/></svg>
<div class="b" style="left:3.00px;top:333.00px;width:13.00px;height:1.00px;background:#8a8a8a;"></div>
<div class="b" style="left:4.20px;top:339.50px;width:11.00px;height:11.00px;background:#c4f5c4;"></div><svg class="b" style="left:3.70px;top:339.00px;" width="12" height="12" viewBox="0 0 12 12"><circle cx="3" cy="3" r="1.500" fill="none" stroke="#333" stroke-width=".8"/><circle cx="8" cy="3" r="1.500" fill="none" stroke="#1464dc" stroke-width=".8"/><circle cx="3" cy="8" r="1.500" fill="none" stroke="#333" stroke-width=".8"/><path d="M6.500 5.500v5.500l1.500-1.500 1 2 1-.5-1-2h2z" fill="#fff" stroke="#222" stroke-width=".7"/></svg>
<div class="b" style="left:4.20px;top:356.50px;width:11.00px;height:11.00px;background:#c4f5c4;"></div><svg class="b" style="left:3.70px;top:356.00px;" width="12" height="12" viewBox="0 0 12 12"><path d="M1.500 9.500l7-7" stroke="#1464dc" stroke-width="1.600"/><circle cx="2" cy="9.500" r="1" fill="#888"/><path d="M6.500 5.500v5.500l1.500-1.500 1 2 1-.5-1-2h2z" fill="#fff" stroke="#222" stroke-width=".7"/></svg>
<div class="b" style="left:3.00px;top:370.50px;width:13.00px;height:1.00px;background:#8a8a8a;"></div>
<div class="b" style="left:4.20px;top:377.50px;width:11.00px;height:11.00px;background:#c4f5c4;"></div><svg class="b" style="left:3.70px;top:377.00px;" width="12" height="12" viewBox="0 0 12 12"><path d="M1.500 10.500l3.500-8.500h5v8.500z" fill="none" stroke="#666" stroke-width=".9"/><circle cx="1.500" cy="10.500" r=".9" fill="#a2a"/><circle cx="5" cy="2" r=".9" fill="#a2a"/><circle cx="10" cy="2" r=".9" fill="#a2a"/><circle cx="10" cy="10.500" r=".9" fill="#a2a"/></svg>
<div class="b" style="left:3.00px;top:392.00px;width:13.00px;height:1.00px;background:#8a8a8a;"></div>
<div class="b" style="left:4.20px;top:398.50px;width:11.00px;height:11.00px;background:#c4f5c4;"></div><svg class="b" style="left:3.70px;top:398.00px;" width="12" height="12" viewBox="0 0 12 12"><text x="3.500" y="6" font-size="6" font-style="italic" font-family="Liberation Sans,sans-serif" fill="#333">2↑</text><path d="M1 8.8h3.6M2.8 7v3.6" stroke="#444" stroke-width="0.8" fill="none"/></svg>
<svg class="b" style="left:5.00px;top:414.00px;" width="4" height="5" viewBox="0 0 4 5"><path d="M3.500 .5v4l-3-2z" fill="#111"/></svg>
<div class="b" style="left:19.00px;top:69.20px;width:198.20px;height:11.60px;background:linear-gradient(#bccbdb,#d7e2ee);"></div>
<span class="t" style="left:21.80px;top:70.00px;font-size:7.38px;line-height:12px;height:12px;color:#111;-webkit-text-stroke:0.2px #111;">Explorer</span>
<svg class="b" style="left:195.50px;top:71.50px;" width="5" height="7" viewBox="0 0 5 7"><path d="M1.400 .8h2.200v2.800h-2.200zM.5 3.800h4M2.500 3.800v2.600" fill="#fff" stroke="#111" stroke-width=".9"/></svg>
<div class="b" style="left:207.00px;top:71.00px;width:8.00px;height:8.00px;background:#d24848;border:1px solid #c23a3a;box-sizing:border-box;"></div>
<svg class="b" style="left:208.50px;top:72.50px;" width="5" height="5" viewBox="0 0 5 5"><path d="M.7 .7l3.600 3.600M4.300 .7l-3.600 3.600" stroke="#fff" stroke-width="1.200"/></svg>
<span class="t" style="left:26.80px;top:92.10px;font-size:8.75px;line-height:14px;height:14px;color:#2b2b2b;font-weight:bold;">DATA</span>
<span class="t" style="left:65.50px;top:92.10px;font-size:8.64px;line-height:14px;height:14px;color:#666;">OUTPUT</span>
<span class="t" style="left:117.80px;top:92.10px;font-size:8.44px;line-height:14px;height:14px;color:#666;">VIEWS</span>
<div class="b" style="left:19.00px;top:113.00px;width:38.00px;height:1.00px;background:#1a3cc8;"></div>
<div class="b" style="left:19.00px;top:112.00px;width:38.00px;height:1.00px;background:rgba(26,60,200,.4);"></div>
<div class="b" style="left:19.00px;top:114.00px;width:38.00px;height:1.00px;background:rgba(26,60,200,.12);"></div>
<span class="t" style="left:38.50px;top:116.80px;font-size:8.23px;line-height:13px;height:13px;color:#222;letter-spacing:0.025px;">Titles</span>
<span class="t" style="left:38.50px;top:132.91px;font-size:8.23px;line-height:13px;height:13px;color:#222;letter-spacing:0.066px;">Specification</span>
<svg class="b" style="left:25.00px;top:135.51px;" width="4.4" height="6.4" viewBox="0 0 4 6"><path d="M.2 .2l3.600 2.800-3.600 2.800z" fill="#555"/></svg>
<span class="t" style="left:38.50px;top:149.02px;font-size:8.23px;line-height:13px;height:13px;color:#222;letter-spacing:0.110px;">Geometry</span>
<svg class="b" style="left:25.00px;top:151.62px;" width="4.4" height="6.4" viewBox="0 0 4 6"><path d="M.2 .2l3.600 2.800-3.600 2.800z" fill="#555"/></svg>
<span class="t" style="left:38.50px;top:165.13px;font-size:8.23px;line-height:13px;height:13px;color:#222;letter-spacing:0.069px;">Materials</span>
<svg class="b" style="left:25.00px;top:167.73px;" width="4.4" height="6.4" viewBox="0 0 4 6"><path d="M.2 .2l3.600 2.800-3.600 2.800z" fill="#555"/></svg>
<span class="t" style="left:38.50px;top:181.24px;font-size:8.23px;line-height:13px;height:13px;color:#222;letter-spacing:0.030px;">Properties</span>
<svg class="b" style="left:25.00px;top:183.84px;" width="4.4" height="6.4" viewBox="0 0 4 6"><path d="M.2 .2l3.600 2.800-3.600 2.800z" fill="#555"/></svg>
<span class="t" style="left:38.50px;top:197.35px;font-size:8.23px;line-height:13px;height:13px;color:#222;letter-spacing:0.032px;">Design</span>
<svg class="b" style="left:25.00px;top:199.95px;" width="4.4" height="6.4" viewBox="0 0 4 6"><path d="M.2 .2l3.600 2.800-3.600 2.800z" fill="#555"/></svg>
<span class="t" style="left:38.50px;top:213.46px;font-size:8.23px;line-height:13px;height:13px;color:#222;letter-spacing:0.084px;">Nodes</span>
<span class="t" style="left:38.50px;top:229.57px;font-size:8.23px;line-height:13px;height:13px;color:#222;letter-spacing:0.173px;">Members</span>
<span class="t" style="left:38.50px;top:245.68px;font-size:8.23px;line-height:13px;height:13px;color:#222;letter-spacing:-0.122px;">Blocks</span>
<span class="t" style="left:38.50px;top:261.79px;font-size:8.23px;line-height:13px;height:13px;color:#222;letter-spacing:-0.062px;">Elements</span>
<span class="t" style="left:38.50px;top:277.90px;font-size:8.23px;line-height:13px;height:13px;color:#222;letter-spacing:-0.056px;">Assemblies</span>
<span class="t" style="left:38.50px;top:294.01px;font-size:8.23px;line-height:13px;height:13px;color:#222;letter-spacing:0.035px;">Constraints</span>
<svg class="b" style="left:25.00px;top:296.61px;" width="4.4" height="6.4" viewBox="0 0 4 6"><path d="M.2 .2l3.600 2.800-3.600 2.800z" fill="#555"/></svg>
<span class="t" style="left:38.50px;top:310.12px;font-size:8.23px;line-height:13px;height:13px;color:#222;letter-spacing:0.074px;">Loading</span>
<svg class="b" style="left:25.00px;top:312.72px;" width="4.4" height="6.4" viewBox="0 0 4 6"><path d="M.2 .2l3.600 2.800-3.600 2.800z" fill="#555"/></svg>
<span class="t" style="left:38.50px;top:326.23px;font-size:8.23px;line-height:13px;height:13px;color:#222;letter-spacing:0.023px;">Dynamic response</span>
<svg class="b" style="left:25.00px;top:328.83px;" width="4.4" height="6.4" viewBox="0 0 4 6"><path d="M.2 .2l3.600 2.800-3.600 2.800z" fill="#555"/></svg>
<span class="t" style="left:38.50px;top:342.34px;font-size:8.23px;line-height:13px;height:13px;color:#222;letter-spacing:-0.022px;">Raft</span>
<svg class="b" style="left:25.00px;top:344.94px;" width="4.4" height="6.4" viewBox="0 0 4 6"><path d="M.2 .2l3.600 2.800-3.600 2.800z" fill="#555"/></svg>
<span class="t" style="left:38.50px;top:358.45px;font-size:8.23px;line-height:13px;height:13px;color:#222;letter-spacing:0.120px;">Bridge</span>
<svg class="b" style="left:25.00px;top:361.05px;" width="4.4" height="6.4" viewBox="0 0 4 6"><path d="M.2 .2l3.600 2.800-3.600 2.800z" fill="#555"/></svg>
<span class="t" style="left:38.50px;top:374.56px;font-size:8.23px;line-height:13px;height:13px;color:#222;letter-spacing:-0.091px;">Analysis stages</span>
<svg class="b" style="left:25.00px;top:377.16px;" width="4.4" height="6.4" viewBox="0 0 4 6"><path d="M.2 .2l3.600 2.800-3.600 2.800z" fill="#555"/></svg>
<span class="t" style="left:38.50px;top:390.67px;font-size:8.23px;line-height:13px;height:13px;color:#222;letter-spacing:-0.221px;">Tasks and cases</span>
<svg class="b" style="left:25.00px;top:393.27px;" width="4.4" height="6.4" viewBox="0 0 4 6"><path d="M.2 .2l3.600 2.800-3.600 2.800z" fill="#555"/></svg>
<span class="t" style="left:38.50px;top:406.78px;font-size:8.23px;line-height:13px;height:13px;color:#222;letter-spacing:-0.006px;">General data</span>
<svg class="b" style="left:25.00px;top:409.38px;" width="4.4" height="6.4" viewBox="0 0 4 6"><path d="M.2 .2l3.600 2.800-3.600 2.800z" fill="#555"/></svg>
<span class="t" style="left:71.20px;top:214.20px;font-size:6.80px;line-height:11px;height:11px;color:#aaa;">2</span>
<span class="t" style="left:82.80px;top:230.50px;font-size:6.80px;line-height:11px;height:11px;color:#aaa;">1</span>
<!-- s_center -->
<div class="b" style="left:220.00px;top:69.00px;width:838.40px;height:1.00px;background:#b8b8b8;"></div>
<div class="b" style="left:220.00px;top:70.00px;width:838.40px;height:18.20px;background:#f0f0f0;"></div>
<div class="b" style="left:1057.20px;top:88.20px;width:1.00px;height:479.00px;background:#e4e4e4;"></div>
<span class="t" style="left:222.50px;top:74.00px;font-size:7.60px;line-height:12px;height:12px;color:#1a1a1a;letter-spacing:-0.508px;">Cases</span>
<div class="b" style="left:245.20px;top:72.60px;width:300.80px;height:14.20px;background:#fff;border:1px solid #a8a8a8;border-radius:1.500px;box-sizing:border-box;"></div>
<span class="t" style="left:247.00px;top:74.40px;font-size:7.60px;line-height:12px;height:12px;color:#1a1a1a;letter-spacing:-0.227px;">none</span>
<svg class="b" style="left:537.00px;top:77.90px;" width="6.5" height="4.5" viewBox="0 0 6.500 4.500"><path d="M.5 .7l2.750 2.800 2.750-2.800" fill="none" stroke="#555" stroke-width=".8"/></svg>
<svg class="b" style="left:550.00px;top:75.50px;" width="7.5" height="7.5" viewBox="0 0 8 8"><path d="M0 4h8M4 0v8" stroke="#8c8c8c" stroke-width=".9"/></svg>
<svg class="b" style="left:565.00px;top:75.50px;" width="8" height="8" viewBox="0 0 8 8"><path d="M0 4h8" stroke="#8c8c8c" stroke-width=".9"/></svg>
<svg class="b" style="left:579.50px;top:74.50px;" width="9" height="10" viewBox="0 0 9 10"><path d="M4.500 0v10M1 5h7M2.500 2.500l2 2 2-2M2.500 7.500l2-2 2 2" fill="none" stroke="#b04040" stroke-width="1.200"/><rect x="3" y="3.500" width="3" height="3" fill="#b04040"/></svg>
<span class="t" style="left:594.80px;top:72.90px;font-size:6.30px;line-height:10px;height:10px;color:#222;font-weight:bold;letter-spacing:-0.040px;">[(•)]</span>
<div class="b" style="left:598.90px;top:76.80px;width:2.20px;height:2.20px;background:#c02020;border-radius:2px;"></div>
<div class="b" style="left:609.20px;top:72.50px;width:0.90px;height:14.00px;background:#a0a0a0;"></div>
<span class="t" style="left:614.70px;top:74.00px;font-size:7.60px;line-height:12px;height:12px;color:#1a1a1a;letter-spacing:-0.431px;">Display</span>
<div class="b" style="left:640.40px;top:72.60px;width:53.20px;height:14.20px;background:#fff;border:1px solid #a8a8a8;border-radius:1.500px;box-sizing:border-box;"></div>
<span class="t" style="left:642.80px;top:74.40px;font-size:7.60px;line-height:12px;height:12px;color:#1a1a1a;letter-spacing:-0.553px;">Members</span>
<svg class="b" style="left:684.60px;top:77.90px;" width="6.5" height="4.5" viewBox="0 0 6.500 4.500"><path d="M.5 .7l2.750 2.800 2.750-2.800" fill="none" stroke="#555" stroke-width=".8"/></svg>
<div class="b" style="left:695.20px;top:72.60px;width:300.60px;height:14.20px;background:#fff;border:1px solid #a8a8a8;border-radius:1.500px;box-sizing:border-box;"></div>
<span class="t" style="left:696.80px;top:74.40px;font-size:7.60px;line-height:12px;height:12px;color:#1a1a1a;letter-spacing:-0.535px;">all</span>
<svg class="b" style="left:986.80px;top:77.90px;" width="6.5" height="4.5" viewBox="0 0 6.500 4.500"><path d="M.5 .7l2.750 2.800 2.750-2.800" fill="none" stroke="#555" stroke-width=".8"/></svg>
<svg class="b" style="left:1000.00px;top:75.50px;" width="7" height="7" viewBox="0 0 7 7"><path d="M0 3.500h7M3.500 0v7" stroke="#18188c" stroke-width="1.500"/></svg>
<div class="b" style="left:998.50px;top:83.60px;width:9.50px;height:0.80px;background:#d4d4d4;"></div>
<svg class="b" style="left:1015.00px;top:75.50px;" width="7.5" height="7" viewBox="0 0 7.500 7"><path d="M0 3.500h7.500" stroke="#18188c" stroke-width="1.500"/></svg>
<div class="b" style="left:1013.50px;top:83.60px;width:10.00px;height:0.80px;background:#d4d4d4;"></div>
<span class="t" style="left:1029.00px;top:71.50px;font-size:9.79px;line-height:16px;height:16px;color:#9a9a9a;">all</span>
<svg class="b" style="left:1046.80px;top:74.50px;" width="5" height="8" viewBox="0 0 5 8"><path d="M1.200 .5h2.600v3.500h-2.600zM.3 4.200h4.400M2.500 4.200v3.500" fill="none" stroke="#aaa" stroke-width=".8"/></svg>
<div class="b" style="left:220.00px;top:88.20px;width:838.00px;height:479.80px;background:#fff;border-left:2px solid #969696;border-top:2px solid #a4a4a4;box-sizing:border-box;"></div>
<div class="b" style="left:222.00px;top:566.30px;width:836.00px;height:0.90px;background:#e8e8e8;"></div>
<svg class="b" style="left:222.00px;top:90.20px;" width="836" height="476.1" viewBox="0 0 836 476.1"><path d="M100.23 0V476.10" stroke="#f3f3f3" stroke-width="1"/><path d="M120.05 0V476.10" stroke="#e5e5e5" stroke-width="1"/><path d="M139.87 0V476.10" stroke="#f3f3f3" stroke-width="1"/><path d="M159.69 0V476.10" stroke="#f3f3f3" stroke-width="1"/><path d="M179.51 0V476.10" stroke="#f3f3f3" stroke-width="1"/><path d="M199.33 0V476.10" stroke="#f3f3f3" stroke-width="1"/><path d="M219.15 0V476.10" stroke="#e5e5e5" stroke-width="1"/><path d="M238.97 0V476.10" stroke="#f3f3f3" stroke-width="1"/><path d="M258.79 0V476.10" stroke="#f3f3f3" stroke-width="1"/><path d="M278.61 0V476.10" stroke="#f3f3f3" stroke-width="1"/><path d="M298.43 0V476.10" stroke="#f3f3f3" stroke-width="1"/><path d="M318.25 0V476.10" stroke="#e5e5e5" stroke-width="1"/><path d="M338.07 0V476.10" stroke="#f3f3f3" stroke-width="1"/><path d="M357.89 0V476.10" stroke="#f3f3f3" stroke-width="1"/><path d="M377.71 0V476.10" stroke="#f3f3f3" stroke-width="1"/><path d="M397.53 0V476.10" stroke="#f3f3f3" stroke-width="1"/><path d="M437.17 0V476.10" stroke="#f3f3f3" stroke-width="1"/><path d="M456.99 0V476.10" stroke="#f3f3f3" stroke-width="1"/><path d="M476.81 0V476.10" stroke="#f3f3f3" stroke-width="1"/><path d="M496.63 0V476.10" stroke="#f3f3f3" stroke-width="1"/><path d="M516.45 0V476.10" stroke="#e5e5e5" stroke-width="1"/><path d="M536.27 0V476.10" stroke="#f3f3f3" stroke-width="1"/><path d="M556.09 0V476.10" stroke="#f3f3f3" stroke-width="1"/><path d="M575.91 0V476.10" stroke="#f3f3f3" stroke-width="1"/><path d="M595.73 0V476.10" stroke="#f3f3f3" stroke-width="1"/><path d="M615.55 0V476.10" stroke="#e5e5e5" stroke-width="1"/><path d="M635.37 0V476.10" stroke="#f3f3f3" stroke-width="1"/><path d="M655.19 0V476.10" stroke="#f3f3f3" stroke-width="1"/><path d="M675.01 0V476.10" stroke="#f3f3f3" stroke-width="1"/><path d="M694.83 0V476.10" stroke="#f3f3f3" stroke-width="1"/><path d="M714.65 0V476.10" stroke="#e5e5e5" stroke-width="1"/><path d="M734.47 0V476.10" stroke="#f3f3f3" stroke-width="1"/><path d="M100.23 19.35H734.47" stroke="#f3f3f3" stroke-width="1"/><path d="M100.23 39.20H734.47" stroke="#e5e5e5" stroke-width="1"/><path d="M100.23 59.05H734.47" stroke="#f3f3f3" stroke-width="1"/><path d="M100.23 78.90H734.47" stroke="#f3f3f3" stroke-width="1"/><path d="M100.23 98.75H734.47" stroke="#f3f3f3" stroke-width="1"/><path d="M100.23 118.60H734.47" stroke="#f3f3f3" stroke-width="1"/><path d="M100.23 138.45H734.47" stroke="#e5e5e5" stroke-width="1"/><path d="M100.23 158.30H734.47" stroke="#f3f3f3" stroke-width="1"/><path d="M100.23 178.15H734.47" stroke="#f3f3f3" stroke-width="1"/><path d="M100.23 198.00H734.47" stroke="#f3f3f3" stroke-width="1"/><path d="M100.23 217.85H734.47" stroke="#f3f3f3" stroke-width="1"/><path d="M100.23 257.55H734.47" stroke="#f3f3f3" stroke-width="1"/><path d="M100.23 277.40H734.47" stroke="#f3f3f3" stroke-width="1"/><path d="M100.23 297.25H734.47" stroke="#f3f3f3" stroke-width="1"/><path d="M100.23 317.10H734.47" stroke="#f3f3f3" stroke-width="1"/><path d="M100.23 336.95H734.47" stroke="#e5e5e5" stroke-width="1"/><path d="M100.23 356.80H734.47" stroke="#f3f3f3" stroke-width="1"/><path d="M100.23 376.65H734.47" stroke="#f3f3f3" stroke-width="1"/><path d="M100.23 396.50H734.47" stroke="#f3f3f3" stroke-width="1"/><path d="M100.23 416.35H734.47" stroke="#f3f3f3" stroke-width="1"/><path d="M100.23 436.20H734.47" stroke="#e5e5e5" stroke-width="1"/><path d="M100.23 456.05H734.47" stroke="#f3f3f3" stroke-width="1"/><path d="M100.23 475.90H734.47" stroke="#f3f3f3" stroke-width="1"/><path d="M100.23 237.70H417.35" stroke="#e0e0e0" stroke-width="1.400"/><path d="M417.35 237.70V476.10" stroke="#d4d4d4" stroke-width="1.300"/><path d="M417.35 0V237.70" stroke="#a4eaa4" stroke-width="1.300"/><path d="M615.80 238.00H734.47" stroke="#f6c2c2" stroke-width="1.700"/><path d="M417.35 238.00H615.80" stroke="#6cbcb4" stroke-width="1.900"/><rect x="416.25" y="236.60" width="2.200" height="2.200" fill="#2a9a94"/><rect x="614.90" y="236.80" width="1.800" height="1.800" fill="#2a9a94"/><path d="M7.80 439.80V467.80" stroke="#9cf49c" stroke-width="1.300"/><path d="M7.80 467.80H36.00" stroke="#f6a0a0" stroke-width="1.300"/><rect x="597.80" y="250.70" width="3.600" height="4.200" fill="#fff" stroke="#e03030" stroke-width="1.200"/></svg>
<span class="t" style="left:229.50px;top:516.20px;font-size:7.50px;line-height:12px;height:12px;color:#b0b0b0;">y</span>
<span class="t" style="left:263.50px;top:550.70px;font-size:7.50px;line-height:12px;height:12px;color:#b0b0b0;">x</span>
<span class="t" style="left:229.30px;top:551.20px;font-size:6.50px;line-height:10px;height:10px;color:#b0b0b0;">z</span>
<div class="b" style="left:810.80px;top:99.20px;width:25.40px;height:25.40px;background:#fbe0e2;border-radius:50%;"></div>
<span class="t" style="left:820.70px;top:106.90px;font-size:7.50px;line-height:12px;height:12px;color:#b8b8b8;">D</span>
<span class="t" style="left:849.40px;top:99.70px;font-size:7.36px;line-height:12px;height:12px;color:#222;letter-spacing:-0.528px;">DESIGN LAYER</span>
<span class="t" style="left:849.40px;top:116.20px;font-size:7.36px;line-height:12px;height:12px;color:#222;letter-spacing:-0.189px;">Scale: 1:108.1</span>
<span class="t" style="left:849.40px;top:132.70px;font-size:7.36px;line-height:12px;height:12px;color:#222;letter-spacing:0.328px;">Highlighted:</span>
<span class="t" style="left:849.40px;top:146.30px;font-size:7.36px;line-height:12px;height:12px;color:#222;letter-spacing:0.157px;">Coincident Nodes</span>
<span class="t" style="left:849.40px;top:160.30px;font-size:7.36px;line-height:12px;height:12px;color:#222;letter-spacing:0.140px;">Coincident Members</span>
<div class="b" style="left:823.00px;top:344.20px;width:143.60px;height:204.80px;background:#f0f0f0;box-shadow:1.500px 1.500px 2px rgba(0,0,0,.55);border:1px solid #cfcfcf;box-sizing:border-box;"></div>
<div class="b" style="left:824.00px;top:345.80px;width:15.50px;height:202.20px;background:#f4f4f4;"></div>
<div class="b" style="left:824.00px;top:345.80px;width:141.60px;height:13.80px;background:#91c9f7;"></div>
<span class="t" style="left:843.10px;top:347.40px;font-size:7.52px;line-height:12px;height:12px;color:#111;letter-spacing:0.200px;">Quit Operation</span>
<span class="t" style="left:843.10px;top:367.60px;font-size:7.52px;line-height:12px;height:12px;color:#111;letter-spacing:-0.024px;">Snap - Centre</span>
<span class="t" style="left:843.10px;top:382.10px;font-size:7.52px;line-height:12px;height:12px;color:#111;letter-spacing:0.032px;">Snap - Perpendicular</span>
<span class="t" style="left:843.10px;top:396.90px;font-size:7.52px;line-height:12px;height:12px;color:#111;letter-spacing:0.108px;">Snap - Align with Grid Axis</span>
<span class="t" style="left:843.10px;top:416.90px;font-size:7.52px;line-height:12px;height:12px;color:#111;letter-spacing:-0.075px;">Copy Image</span>
<span class="t" style="left:843.10px;top:431.60px;font-size:7.52px;line-height:12px;height:12px;color:#111;letter-spacing:-0.253px;">Save Image</span>
<span class="t" style="left:843.10px;top:451.90px;font-size:7.52px;line-height:12px;height:12px;color:#111;letter-spacing:0.020px;">Save Default View Settings</span>
<span class="t" style="left:843.10px;top:466.50px;font-size:7.52px;line-height:12px;height:12px;color:#111;letter-spacing:-0.077px;">Save As Preferred View...</span>
<span class="t" style="left:843.10px;top:481.20px;font-size:7.52px;line-height:12px;height:12px;color:#111;letter-spacing:-0.058px;">Save Graphic View...</span>
<span class="t" style="left:843.10px;top:501.00px;font-size:7.52px;line-height:12px;height:12px;color:#111;letter-spacing:0.039px;">Graphic Settings...</span>
<span class="t" style="left:843.10px;top:515.90px;font-size:7.52px;line-height:12px;height:12px;color:#111;letter-spacing:-0.104px;">Switch Layer</span>
<span class="t" style="left:843.10px;top:535.70px;font-size:7.52px;line-height:12px;height:12px;color:#111;letter-spacing:0.083px;">Hide</span>
<span class="t" style="left:936.80px;top:416.90px;font-size:7.52px;line-height:12px;height:12px;color:#111;letter-spacing:-0.020px;">Ctrl+C</span>
<span class="t" style="left:921.60px;top:515.90px;font-size:7.52px;line-height:12px;height:12px;color:#111;letter-spacing:0.191px;">Ctrl+Alt+D</span>
<div class="b" style="left:840.00px;top:362.10px;width:125.60px;height:1.00px;background:#dadada;"></div>
<div class="b" style="left:840.00px;top:363.10px;width:125.60px;height:0.80px;background:#f6f6f6;"></div>
<div class="b" style="left:840.00px;top:410.60px;width:125.60px;height:1.00px;background:#dadada;"></div>
<div class="b" style="left:840.00px;top:411.60px;width:125.60px;height:0.80px;background:#f6f6f6;"></div>
<div class="b" style="left:840.00px;top:445.80px;width:125.60px;height:1.00px;background:#dadada;"></div>
<div class="b" style="left:840.00px;top:446.80px;width:125.60px;height:0.80px;background:#f6f6f6;"></div>
<div class="b" style="left:840.00px;top:494.90px;width:125.60px;height:1.00px;background:#dadada;"></div>
<div class="b" style="left:840.00px;top:495.90px;width:125.60px;height:0.80px;background:#f6f6f6;"></div>
<div class="b" style="left:840.00px;top:530.00px;width:125.60px;height:1.00px;background:#dadada;"></div>
<div class="b" style="left:840.00px;top:531.00px;width:125.60px;height:0.80px;background:#f6f6f6;"></div>
<svg class="b" style="left:960.80px;top:434.40px;" width="3" height="5" viewBox="0 0 3 5"><path d="M0 0l3 2.500-3 2.500z" fill="#111"/></svg>
<svg class="b" style="left:960.80px;top:538.50px;" width="3" height="5" viewBox="0 0 3 5"><path d="M0 0l3 2.500-3 2.500z" fill="#111"/></svg>
<div class="b" style="left:825.80px;top:367.40px;width:10.80px;height:10.80px;background:#b4ecf6;"></div>
<svg class="b" style="left:825.80px;top:367.40px;" width="11" height="11" viewBox="0 0 11 11"><path d="M1.500 8.500l6.500-6M5 5.500l4 4" fill="none" stroke="#e02020" stroke-width="1.200"/><path d="M1.500 8.500l4-3.500" stroke="#1458d0" stroke-width="1.300"/><circle cx="8.300" cy="1.800" r="1.100" fill="#fff" stroke="#444" stroke-width=".6"/><circle cx="1.800" cy="9" r="1" fill="#fff" stroke="#444" stroke-width=".6"/></svg>
<div class="b" style="left:825.80px;top:381.90px;width:10.80px;height:10.80px;background:#b4ecf6;"></div>
<svg class="b" style="left:825.80px;top:381.90px;" width="11" height="11" viewBox="0 0 11 11"><path d="M1.500 9l6.500-7" stroke="#1458d0" stroke-width="1.300"/><path d="M4.500 6l4 3.500" stroke="#e02020" stroke-width="1.200"/><circle cx="8.300" cy="1.800" r="1.100" fill="#fff" stroke="#444" stroke-width=".6"/><circle cx="1.800" cy="9" r="1" fill="#fff" stroke="#444" stroke-width=".6"/></svg>
<div class="b" style="left:825.80px;top:396.70px;width:10.80px;height:10.80px;background:#b4ecf6;"></div>
<svg class="b" style="left:825.80px;top:396.70px;" width="11" height="11" viewBox="0 0 11 11"><path d="M6 1v9.500" stroke="#e02020" stroke-width="1.200"/><path d="M1.500 9.500l6.500-7.500" stroke="#1458d0" stroke-width="1.300"/><circle cx="8.300" cy="1.800" r="1.100" fill="#fff" stroke="#444" stroke-width=".6"/><circle cx="1.800" cy="9" r="1" fill="#fff" stroke="#444" stroke-width=".6"/></svg>
<svg class="b" style="left:826.50px;top:417.20px;" width="10" height="10" viewBox="0 0 10 10"><path d="M1 2.500h4.500v7h-4.500zM3.500 2.500v-1.500h3.500l2 2v5.500h-3.500" fill="#fff" stroke="#666" stroke-width=".8"/></svg>
<!-- s_right -->
<div class="b" style="left:1061.20px;top:69.20px;width:200.40px;height:11.60px;background:linear-gradient(#bccbdb,#d7e2ee);"></div>
<span class="t" style="left:1063.90px;top:70.00px;font-size:7.48px;line-height:12px;height:12px;color:#111;-webkit-text-stroke:0.35px #111;">Properties</span>
<svg class="b" style="left:1240.50px;top:71.50px;" width="5" height="7" viewBox="0 0 5 7"><path d="M1.400 .8h2.200v2.800h-2.200zM.5 3.800h4M2.500 3.800v2.600" fill="#fff" stroke="#111" stroke-width=".9"/></svg>
<div class="b" style="left:1251.30px;top:71.00px;width:8.00px;height:8.00px;background:#d24848;border:1px solid #c23a3a;box-sizing:border-box;"></div>
<svg class="b" style="left:1252.80px;top:72.50px;" width="5" height="5" viewBox="0 0 5 5"><path d="M.7 .7l3.600 3.600M4.300 .7l-3.600 3.600" stroke="#fff" stroke-width="1.200"/></svg>
<div class="b" style="left:1061.20px;top:81.50px;width:200.40px;height:16.50px;background:#f7f7f7;"></div>
<div class="b" style="left:1179.40px;top:82.50px;width:37.10px;height:15.00px;background:#ededed;"></div>
<span class="t" style="left:1077.40px;top:85.30px;font-size:7.41px;line-height:12px;height:12px;color:#8c8c8c;letter-spacing:0.062px;">Entit...</span>
<span class="t" style="left:1116.00px;top:85.30px;font-size:7.41px;line-height:12px;height:12px;color:#8c8c8c;letter-spacing:-0.157px;">Labels</span>
<span class="t" style="left:1154.90px;top:85.30px;font-size:7.41px;line-height:12px;height:12px;color:#8c8c8c;letter-spacing:0.011px;">Diag...</span>
<span class="t" style="left:1232.40px;top:85.30px;font-size:7.41px;line-height:12px;height:12px;color:#8c8c8c;letter-spacing:0.053px;">Cont...</span>
<span class="t" style="left:1193.70px;top:85.80px;font-size:6.91px;line-height:11px;height:11px;color:#2a2a2a;font-weight:bold;">Prop...</span>
<div class="b" style="left:1101.10px;top:84.50px;width:0.80px;height:12.00px;background:#b0b0b0;"></div>
<div class="b" style="left:1139.90px;top:84.50px;width:0.80px;height:12.00px;background:#b0b0b0;"></div>
<div class="b" style="left:1256.30px;top:84.50px;width:0.80px;height:12.00px;background:#b0b0b0;"></div>
<div class="b" style="left:1216.70px;top:83.50px;width:1.20px;height:14.00px;background:#222;"></div>
<svg class="b" style="left:1065.50px;top:85.50px;" width="10" height="10" viewBox="0 0 10 10"><rect x=".5" y=".5" width="9" height="9" fill="none" stroke="#1464dc" stroke-width="1" stroke-dasharray="1.500 1"/><path d="M2.500 2.500h2v2h-2zM5.800 2.500h2v2h-2zM2.500 5.800h2v2h-2zM5.800 5.800h2v2h-2z" fill="none" stroke="#555" stroke-width=".8"/></svg>
<svg class="b" style="left:1104.50px;top:85.50px;" width="10" height="10" viewBox="0 0 10 10"><path d="M.8 6l5-5h3.400v3.400l-5 5z" fill="#555"/><circle cx="7.600" cy="2.600" r=".8" fill="#fff"/></svg>
<svg class="b" style="left:1143.00px;top:85.50px;" width="10" height="10" viewBox="0 0 10 10"><path d="M.8 1l2.500 6 3 1.500 3-3" fill="none" stroke="#1464dc" stroke-width="1"/><path d="M.8 1v5.500h8.500" fill="none" stroke="#1464dc" stroke-width="1"/></svg>
<svg class="b" style="left:1181.00px;top:85.00px;" width="11" height="11" viewBox="0 0 11 11"><rect x=".6" y=".6" width="9.800" height="9.800" fill="none" stroke="#1464dc" stroke-width="1.100" stroke-dasharray="1.600 1"/><rect x="2.500" y="2.500" width="5.500" height="5.500" fill="#fff" stroke="#555" stroke-width=".9"/><path d="M5 9.500l5-5" stroke="#1464dc" stroke-width="1.300"/></svg>
<svg class="b" style="left:1220.40px;top:85.50px;" width="10" height="10" viewBox="0 0 10 10"><defs><linearGradient id="rg" x1="0" y1="0" x2="1" y2="1"><stop offset="0" stop-color="#24e"/><stop offset=".4" stop-color="#3c8"/><stop offset=".65" stop-color="#ee2"/><stop offset="1" stop-color="#e32"/></linearGradient></defs><rect x=".5" y=".5" width="9" height="9" fill="url(#rg)" stroke="#444" stroke-width=".8"/></svg>
<div class="b" style="left:1061.20px;top:98.00px;width:200.80px;height:469.20px;background:#fff;border:1px solid #a9a9a9;border-top:none;box-sizing:border-box;"></div>
<span class="t" style="left:1068.80px;top:103.40px;font-size:10.64px;line-height:17px;height:17px;color:#3a3a3a;">Member Properties</span>
<span class="t" style="left:1068.80px;top:118.10px;font-size:7.34px;line-height:12px;height:12px;color:#333;letter-spacing:-0.042px;">Defaults</span>
<div class="b" style="left:1063.00px;top:133.00px;width:193.00px;height:1.00px;background:#dcdcdc;"></div>
<div class="b" style="left:1256.40px;top:134.30px;width:3.60px;height:269.50px;background:#808080;"></div>
<span class="t" style="left:1067.40px;top:143.50px;font-size:7.34px;line-height:12px;height:12px;color:#333;letter-spacing:0.003px;">Name</span>
<span class="t" style="left:1067.40px;top:176.10px;font-size:7.34px;line-height:12px;height:12px;color:#333;letter-spacing:-0.022px;">Colour</span>
<span class="t" style="left:1067.40px;top:208.00px;font-size:7.34px;line-height:12px;height:12px;color:#333;letter-spacing:0.123px;">Member type</span>
<span class="t" style="left:1067.40px;top:240.00px;font-size:7.34px;line-height:12px;height:12px;color:#333;letter-spacing:0.031px;">Property</span>
<span class="t" style="left:1131.60px;top:240.00px;font-size:7.34px;line-height:12px;height:12px;color:#333;letter-spacing:-0.022px;">Group</span>
<span class="t" style="left:1196.00px;top:240.00px;font-size:7.34px;line-height:12px;height:12px;color:#333;letter-spacing:0.082px;">Orientation node</span>
<span class="t" style="left:1067.40px;top:271.90px;font-size:7.34px;line-height:12px;height:12px;color:#333;letter-spacing:0.034px;">Orientation angle (°)</span>
<span class="t" style="left:1067.40px;top:308.50px;font-size:7.34px;line-height:12px;height:12px;color:#333;letter-spacing:-0.327px;">Releases</span>
<span class="t" style="left:1067.40px;top:394.30px;font-size:7.34px;line-height:12px;height:12px;color:#333;letter-spacing:-0.034px;">Offsets (m)</span>
<span class="t" style="left:1063.90px;top:435.90px;font-size:7.34px;line-height:12px;height:12px;color:#333;letter-spacing:-0.058px;">Dummy</span>
<span class="t" style="left:1067.90px;top:467.80px;font-size:7.34px;line-height:12px;height:12px;color:#333;letter-spacing:0.060px;">Automatic offsets</span>
<span class="t" style="left:1067.40px;top:505.50px;font-size:7.34px;line-height:12px;height:12px;color:#333;letter-spacing:-0.067px;">1D analysis type</span>
<span class="t" style="left:1067.40px;top:536.90px;font-size:7.34px;line-height:12px;height:12px;color:#333;letter-spacing:-0.067px;">2D analysis type</span>
<div class="b" style="left:1066.90px;top:152.10px;width:188.80px;height:15.40px;background:#f0f0f0;"></div>
<div class="b" style="left:1087.20px;top:184.40px;width:168.50px;height:15.20px;background:#f0f0f0;"></div>
<div class="b" style="left:1066.90px;top:216.80px;width:188.80px;height:14.80px;background:#f0f0f0;"></div>
<div class="b" style="left:1066.90px;top:249.10px;width:60.00px;height:14.60px;background:#f0f0f0;"></div>
<div class="b" style="left:1131.20px;top:249.10px;width:60.40px;height:14.60px;background:#f0f0f0;"></div>
<div class="b" style="left:1196.00px;top:249.10px;width:59.70px;height:14.60px;background:#f0f0f0;"></div>
<div class="b" style="left:1066.90px;top:281.40px;width:188.80px;height:14.40px;background:#f0f0f0;"></div>
<div class="b" style="left:1066.90px;top:412.40px;width:44.20px;height:14.90px;background:#f0f0f0;"></div>
<div class="b" style="left:1115.20px;top:412.40px;width:44.60px;height:14.90px;background:#f0f0f0;"></div>
<div class="b" style="left:1164.00px;top:412.40px;width:43.90px;height:14.90px;background:#f0f0f0;"></div>
<div class="b" style="left:1211.80px;top:412.40px;width:43.90px;height:14.90px;background:#f0f0f0;"></div>
<div class="b" style="left:1066.90px;top:513.90px;width:188.80px;height:14.70px;background:#f0f0f0;"></div>
<div class="b" style="left:1066.90px;top:545.80px;width:188.80px;height:14.80px;background:#f0f0f0;"></div>
<span class="t" style="left:1070.00px;top:153.80px;font-size:9.33px;line-height:15px;height:15px;color:#6e6e6e;letter-spacing:0.090px;">(none)</span>
<span class="t" style="left:1090.50px;top:185.70px;font-size:9.33px;line-height:15px;height:15px;color:#6e6e6e;letter-spacing:0.024px;">(none)</span>
<span class="t" style="left:1070.40px;top:218.00px;font-size:9.33px;line-height:15px;height:15px;color:#444;letter-spacing:0.040px;">1D generic</span>
<span class="t" style="left:1070.90px;top:250.00px;font-size:9.33px;line-height:15px;height:15px;color:#222;">1</span>
<span class="t" style="left:1135.20px;top:250.00px;font-size:9.33px;line-height:15px;height:15px;color:#222;">1</span>
<span class="t" style="left:1198.60px;top:250.00px;font-size:9.33px;line-height:15px;height:15px;color:#6e6e6e;letter-spacing:-0.026px;">(none)</span>
<span class="t" style="left:1070.40px;top:282.10px;font-size:9.33px;line-height:15px;height:15px;color:#222;">0</span>
<span class="t" style="left:1070.40px;top:413.60px;font-size:9.33px;line-height:15px;height:15px;color:#222;">0</span>
<span class="t" style="left:1118.70px;top:413.60px;font-size:9.33px;line-height:15px;height:15px;color:#222;">0</span>
<span class="t" style="left:1167.50px;top:413.60px;font-size:9.33px;line-height:15px;height:15px;color:#222;">0</span>
<span class="t" style="left:1215.30px;top:413.60px;font-size:9.33px;line-height:15px;height:15px;color:#222;">0</span>
<span class="t" style="left:1070.40px;top:514.80px;font-size:9.33px;line-height:15px;height:15px;color:#444;letter-spacing:-0.030px;">Beam elements</span>
<span class="t" style="left:1070.40px;top:546.80px;font-size:9.33px;line-height:15px;height:15px;color:#444;letter-spacing:-0.037px;">Linear elements</span>
<svg class="b" style="left:1242.60px;top:191.00px;" width="6" height="4.5" viewBox="0 0 6 4.500"><path d="M.6 .7l2.400 2.500 2.400-2.500" fill="none" stroke="#333" stroke-width="1"/></svg>
<svg class="b" style="left:1242.60px;top:223.50px;" width="6" height="4.5" viewBox="0 0 6 4.500"><path d="M.6 .7l2.400 2.500 2.400-2.500" fill="none" stroke="#333" stroke-width="1"/></svg>
<svg class="b" style="left:1242.60px;top:520.00px;" width="6" height="4.5" viewBox="0 0 6 4.500"><path d="M.6 .7l2.400 2.500 2.400-2.500" fill="none" stroke="#333" stroke-width="1"/></svg>
<svg class="b" style="left:1242.60px;top:552.00px;" width="6" height="4.5" viewBox="0 0 6 4.500"><path d="M.6 .7l2.400 2.500 2.400-2.500" fill="none" stroke="#333" stroke-width="1"/></svg>
<svg class="b" style="left:1070.00px;top:187.50px;" width="11" height="11" viewBox="0 0 11 11"><path d="M5.500 1q4 4.500 3 7a3.200 3.200 0 0 1-6 0q-1-2.500 3-7z" fill="#2a2a2a"/><path d="M1 1.500l9 9" stroke="#fff" stroke-width="2"/><path d="M1.300 1.300l9 9" stroke="#2a2a2a" stroke-width="1"/></svg>
<span class="t" style="left:1094.59px;top:318.20px;font-size:6.83px;line-height:11px;height:11px;color:#444;">x</span>
<span class="t" style="left:1114.99px;top:318.20px;font-size:6.83px;line-height:11px;height:11px;color:#444;">y</span>
<span class="t" style="left:1135.69px;top:318.20px;font-size:6.83px;line-height:11px;height:11px;color:#444;">z</span>
<span class="t" style="left:1154.99px;top:318.20px;font-size:6.83px;line-height:11px;height:11px;color:#444;">xx</span>
<span class="t" style="left:1175.49px;top:318.20px;font-size:6.83px;line-height:11px;height:11px;color:#444;">yy</span>
<span class="t" style="left:1196.09px;top:318.20px;font-size:6.83px;line-height:11px;height:11px;color:#444;">zz</span>
<span class="t" style="left:1067.40px;top:332.00px;font-size:7.34px;line-height:12px;height:12px;color:#333;letter-spacing:-0.238px;">End 1</span>
<span class="t" style="left:1067.40px;top:351.70px;font-size:7.34px;line-height:12px;height:12px;color:#333;letter-spacing:-0.238px;">End 2</span>
<div class="b" style="left:1090.50px;top:330.80px;width:12.10px;height:12.10px;background:#fff;border:1.300px solid #7c7474;border-radius:1.300px;box-sizing:border-box;"></div>
<div class="b" style="left:1090.50px;top:350.80px;width:12.10px;height:12.10px;background:#fff;border:1.300px solid #7c7474;border-radius:1.300px;box-sizing:border-box;"></div>
<div class="b" style="left:1111.14px;top:330.80px;width:12.10px;height:12.10px;background:#fff;border:1.300px solid #7c7474;border-radius:1.300px;box-sizing:border-box;"></div>
<div class="b" style="left:1111.14px;top:350.80px;width:12.10px;height:12.10px;background:#fff;border:1.300px solid #7c7474;border-radius:1.300px;box-sizing:border-box;"></div>
<div class="b" style="left:1131.78px;top:330.80px;width:12.10px;height:12.10px;background:#fff;border:1.300px solid #7c7474;border-radius:1.300px;box-sizing:border-box;"></div>
<div class="b" style="left:1131.78px;top:350.80px;width:12.10px;height:12.10px;background:#fff;border:1.300px solid #7c7474;border-radius:1.300px;box-sizing:border-box;"></div>
<div class="b" style="left:1152.42px;top:330.80px;width:12.10px;height:12.10px;background:#fff;border:1.300px solid #7c7474;border-radius:1.300px;box-sizing:border-box;"></div>
<div class="b" style="left:1152.42px;top:350.80px;width:12.10px;height:12.10px;background:#fff;border:1.300px solid #7c7474;border-radius:1.300px;box-sizing:border-box;"></div>
<div class="b" style="left:1173.06px;top:330.80px;width:12.10px;height:12.10px;background:#fff;border:1.300px solid #7c7474;border-radius:1.300px;box-sizing:border-box;"></div>
<div class="b" style="left:1173.06px;top:350.80px;width:12.10px;height:12.10px;background:#fff;border:1.300px solid #7c7474;border-radius:1.300px;box-sizing:border-box;"></div>
<div class="b" style="left:1193.70px;top:330.80px;width:12.10px;height:12.10px;background:#fff;border:1.300px solid #7c7474;border-radius:1.300px;box-sizing:border-box;"></div>
<div class="b" style="left:1193.70px;top:350.80px;width:12.10px;height:12.10px;background:#fff;border:1.300px solid #7c7474;border-radius:1.300px;box-sizing:border-box;"></div>
<div class="b" style="left:1066.90px;top:366.90px;width:80.40px;height:15.20px;background:#0059b3;border-radius:2.500px;"></div>
<span class="t" style="left:1070.40px;top:368.50px;font-size:8.27px;line-height:13px;height:13px;color:#fff;font-weight:bold;">Release stiffness...</span>
<span class="t" style="left:1067.00px;top:403.80px;font-size:7.34px;line-height:12px;height:12px;color:#444;">x1</span>
<span class="t" style="left:1115.90px;top:403.80px;font-size:7.34px;line-height:12px;height:12px;color:#444;">x2</span>
<span class="t" style="left:1163.60px;top:403.80px;font-size:7.34px;line-height:12px;height:12px;color:#444;">y</span>
<span class="t" style="left:1212.10px;top:403.80px;font-size:7.34px;line-height:12px;height:12px;color:#444;">z</span>
<div class="b" style="left:1067.90px;top:448.30px;width:12.10px;height:12.10px;background:#fff;border:1.300px solid #7c7474;border-radius:1.300px;box-sizing:border-box;"></div>
<span class="t" style="left:1064.80px;top:477.00px;font-size:7.34px;line-height:12px;height:12px;color:#333;letter-spacing:-0.358px;">End 1</span>
<span class="t" style="left:1085.20px;top:477.00px;font-size:7.34px;line-height:12px;height:12px;color:#333;letter-spacing:-0.298px;">End 2</span>
<span class="t" style="left:1105.00px;top:477.00px;font-size:7.34px;line-height:12px;height:12px;color:#333;letter-spacing:0.001px;">Internal</span>
<div class="b" style="left:1067.90px;top:490.30px;width:12.10px;height:12.10px;background:#fff;border:1.300px solid #7c7474;border-radius:1.300px;box-sizing:border-box;"></div>
<div class="b" style="left:1088.70px;top:490.30px;width:12.10px;height:12.10px;background:#fff;border:1.300px solid #7c7474;border-radius:1.300px;box-sizing:border-box;"></div>
<div class="b" style="left:1109.40px;top:490.30px;width:12.10px;height:12.10px;background:#fff;border:1.300px solid #7c7474;border-radius:1.300px;box-sizing:border-box;"></div>
<div class="b" style="left:1262.30px;top:70.50px;width:17.70px;height:228.40px;background:#fff;border-left:1px solid #cdcdcd;border-bottom:1px solid #cdcdcd;box-sizing:border-box;"></div>
<div class="b" style="left:1264.50px;top:72.00px;width:14.00px;height:1.00px;background:repeating-linear-gradient(90deg,#9a9a9a 0 1px,transparent 1px 2.500px);"></div>
<div class="b" style="left:1263.60px;top:161.40px;width:16.00px;height:14.80px;background:#cce4f7;border:1px solid #a5d2f5;border-radius:2px;box-sizing:border-box;"></div>
<svg class="b" style="left:1265.30px;top:77.50px;" width="12" height="12" viewBox="0 0 12 12"><path d="M3 9l6-6" stroke="#666" stroke-width=".9"/><circle cx="2.500" cy="9.500" r="1.400" fill="#fff" stroke="#666" stroke-width=".8"/><circle cx="9.500" cy="2.500" r="1.400" fill="#fff" stroke="#666" stroke-width=".8"/></svg>
<svg class="b" style="left:1265.30px;top:93.30px;" width="12" height="12" viewBox="0 0 12 12"><path d="M2 2.500h8M2 9.500h8" stroke="#444" stroke-width="1.200"/><path d="M6 2.500v7" stroke="#444" stroke-width="1.500"/></svg>
<svg class="b" style="left:1265.30px;top:109.90px;" width="12" height="12" viewBox="0 0 12 12"><rect x="1" y="2.500" width="8" height="8.500" fill="#fff" stroke="#444" stroke-width=".9"/><path d="M2.500 5.500q3 0 3 4" fill="none" stroke="#1464dc" stroke-width="2"/><circle cx="8.500" cy="3.500" r="2" fill="#fff" stroke="#222" stroke-width="1.200"/><path d="M8.500 .5v6M5.500 3.500h6M6.400 1.400l4.200 4.200M10.600 1.400l-4.200 4.200" stroke="#222" stroke-width=".8"/><circle cx="8.500" cy="3.500" r="1" fill="#fff"/></svg>
<div class="b" style="left:1264.50px;top:125.00px;width:14.00px;height:1.00px;background:#8a8a8a;"></div>
<svg class="b" style="left:1265.30px;top:130.90px;" width="12" height="12" viewBox="0 0 12 12"><path d="M2 2l1.500 8.500M2 2.500h7.500M9.500 2l1 8.500" fill="none" stroke="#333" stroke-width="1.100"/></svg>
<svg class="b" style="left:1265.30px;top:146.60px;" width="12" height="12" viewBox="0 0 12 12"><rect x="1.500" y="5.500" width="9" height="5" fill="#333"/><path d="M1.500 2.500h9v2h-9z" fill="#fff" stroke="#333" stroke-width=".9"/><path d="M3.500 2.500v2M5.500 2.500v2M7.500 2.500v2" stroke="#333" stroke-width=".7"/><rect x="3" y="7.500" width="6" height="1.500" fill="#fff"/></svg>
<svg class="b" style="left:1265.30px;top:163.50px;" width="12" height="12" viewBox="0 0 12 12"><path d="M3.500 5l4-1.500 3 1.500v4.500l-3.500 1.500-3.500-1.500zM3.500 5l3.500 1.500 3.500-1.500M7 6.500v4.500" fill="#fff" stroke="#222" stroke-width=".9"/><path d="M7 6.500l3.500-1.500v4.500l-3.500 1.500z" fill="#444"/><path d="M1 1.500l2.500 2.500" stroke="#e83" stroke-width="1.200"/></svg>
<div class="b" style="left:1264.50px;top:178.40px;width:14.00px;height:1.00px;background:#8a8a8a;"></div>
<svg class="b" style="left:1265.30px;top:183.60px;" width="12" height="12" viewBox="0 0 12 12"><defs><linearGradient id="rg2" x1="0" y1="0" x2="1" y2="1"><stop offset="0" stop-color="#24e"/><stop offset=".4" stop-color="#2c4"/><stop offset=".7" stop-color="#ee2"/><stop offset="1" stop-color="#e22"/></linearGradient></defs><rect x="1" y="2.500" width="8" height="8.500" fill="url(#rg2)" stroke="#444" stroke-width=".6"/><circle cx="8.500" cy="3.500" r="2" fill="#fff" stroke="#222" stroke-width="1.200"/><path d="M8.500 .5v6M5.500 3.500h6M6.400 1.400l4.200 4.200M10.600 1.400l-4.200 4.200" stroke="#222" stroke-width=".8"/><circle cx="8.500" cy="3.500" r="1" fill="#fff"/></svg>
<svg class="b" style="left:1265.30px;top:200.30px;" width="12" height="12" viewBox="0 0 12 12"><rect x="1" y="2.500" width="8" height="8.500" fill="#fff" stroke="#444" stroke-width=".9"/><path d="M2 5l3 3 3-2" fill="none" stroke="#1464dc" stroke-width="1.600"/><circle cx="8.500" cy="3.500" r="2" fill="#fff" stroke="#222" stroke-width="1.200"/><path d="M8.500 .5v6M5.500 3.500h6M6.400 1.400l4.200 4.200M10.600 1.400l-4.200 4.200" stroke="#222" stroke-width=".8"/><circle cx="8.500" cy="3.500" r="1" fill="#fff"/></svg>
<div class="b" style="left:1264.50px;top:216.30px;width:14.00px;height:1.00px;background:#8a8a8a;"></div>
<svg class="b" style="left:1265.30px;top:221.30px;" width="12" height="12" viewBox="0 0 12 12"><path d="M6 1.500v9" stroke="#222" stroke-width="1.200"/><path d="M1 6h3.500M3 4.500l1.500 1.500-1.500 1.500M11 6h-3.500M9 4.500l-1.500 1.500 1.500 1.500" fill="none" stroke="#222" stroke-width=".9"/></svg>
<svg class="b" style="left:1265.30px;top:237.00px;" width="12" height="12" viewBox="0 0 12 12"><path d="M1.500 2v6l4-3v4M5.500 9l2.500 2 2.500-2v-4" fill="none" stroke="#b4b4b4" stroke-width=".9"/></svg>
<span class="t" style="left:1265.80px;top:255.20px;font-size:7.20px;line-height:12px;height:12px;color:#9a9a9a;">×2</span>
<span class="t" style="left:1267.00px;top:271.00px;font-size:7.20px;line-height:12px;height:12px;color:#9a9a9a;font-style:italic;">/2</span>
<svg class="b" style="left:1265.50px;top:290.50px;" width="4" height="5" viewBox="0 0 4 5"><path d="M3.500 .5v4l-3-2z" fill="#111"/></svg>
<!-- s_bottom -->
<div class="b" style="left:0.00px;top:421.60px;width:18.80px;height:219.40px;background:#fff;"></div>
<div class="b" style="left:19.00px;top:570.40px;width:1243.00px;height:11.90px;background:linear-gradient(#bccbdb,#d7e2ee);"></div>
<span class="t" style="left:21.80px;top:571.85px;font-size:7.13px;line-height:11px;height:11px;color:#111;-webkit-text-stroke:0.2px #111;">Messages</span>
<svg class="b" style="left:1240.00px;top:572.85px;" width="5" height="7" viewBox="0 0 5 7"><path d="M1.400 .8h2.200v2.800h-2.200zM.5 3.800h4M2.500 3.800v2.600" fill="#fff" stroke="#111" stroke-width=".9"/></svg>
<div class="b" style="left:1251.30px;top:572.35px;width:8.00px;height:8.00px;background:#d24848;border:1px solid #c23a3a;box-sizing:border-box;"></div>
<svg class="b" style="left:1252.80px;top:573.85px;" width="5" height="5" viewBox="0 0 5 5"><path d="M.7 .7l3.600 3.600M4.300 .7l-3.600 3.600" stroke="#fff" stroke-width="1.200"/></svg>
<div class="b" style="left:19.00px;top:582.00px;width:1243.00px;height:18.80px;background:#f7f7f7;"></div>
<div class="b" style="left:19.00px;top:582.00px;width:1243.00px;height:2.00px;background:#fdfdfd;"></div>
<div class="b" style="left:19.00px;top:599.00px;width:1243.00px;height:2.00px;background:#f2f5f8;"></div>
<div class="b" style="left:18.60px;top:601.00px;width:1243.20px;height:40.40px;background:#fff;border-left:1px solid #c4c4c4;border-right:1px solid #b4b4b4;border-bottom:1px solid #c2c2c2;box-sizing:border-box;"></div>
<svg class="b" style="left:23.20px;top:587.50px;" width="10" height="10" viewBox="0 0 10 10"><rect x=".5" y=".5" width="9" height="9" rx="1" fill="#fff" stroke="#666" stroke-width=".8"/><path d="M2 3h1M4 3h4M2 5h1M4 5h4M2 7h1M4 7h4" stroke="#666" stroke-width=".8"/></svg>
<span class="t" style="left:34.80px;top:587.50px;font-size:6.90px;line-height:11px;height:11px;color:#111;font-weight:bold;">Messages</span>
<div class="b" style="left:72.20px;top:585.80px;width:1.20px;height:13.40px;background:#333;"></div>
<svg class="b" style="left:76.20px;top:587.50px;" width="10" height="10" viewBox="0 0 10 10"><rect x=".5" y=".8" width="9" height="8.700" fill="#fff" stroke="#444" stroke-width=".9"/><rect x=".5" y=".8" width="9" height="2.200" fill="#444"/><text x="1.300" y="8.400" font-size="5.500" font-weight="bold" font-family="Liberation Sans,sans-serif" fill="#444">ab</text></svg>
<span class="t" style="left:88.20px;top:587.00px;font-size:7.31px;line-height:12px;height:12px;color:#8c8c8c;letter-spacing:-0.056px;">Results</span>
<div class="b" style="left:116.60px;top:586.50px;width:0.80px;height:12.00px;background:#b4b4b4;"></div>
<svg class="b" style="left:121.00px;top:586.50px;" width="9.5" height="11" viewBox="0 0 9.500 11"><rect x=".7" y="1.800" width="8" height="8.500" fill="#fff" stroke="#555" stroke-width=".9"/><rect x="3" y=".4" width="3.500" height="2" fill="#555"/><path d="M2.500 6l1.800 2 3-3.500" fill="none" stroke="#1a9a4a" stroke-width="1.300"/></svg>
<span class="t" style="left:132.20px;top:587.00px;font-size:7.31px;line-height:12px;height:12px;color:#8c8c8c;letter-spacing:0.056px;">Reports</span>
<div class="b" style="left:162.60px;top:586.50px;width:0.80px;height:12.00px;background:#b4b4b4;"></div>
<span class="t" style="left:21.20px;top:600.70px;font-size:9.69px;line-height:16px;height:16px;color:#111;font-weight:bold;">Node 2</span>
<span class="t" style="left:30.50px;top:616.50px;font-size:7.42px;line-height:12px;height:12px;color:#222;letter-spacing:-0.058px;">Colour</span>
<span class="t" style="left:123.20px;top:616.50px;font-size:7.42px;line-height:12px;height:12px;color:#222;letter-spacing:0.032px;">&lt;undefined&gt;</span>
<span class="t" style="left:122.30px;top:628.70px;font-size:7.42px;line-height:12px;height:12px;color:#222;">X</span>
<span class="t" style="left:163.60px;top:628.70px;font-size:7.42px;line-height:12px;height:12px;color:#222;">Y</span>
<span class="t" style="left:193.00px;top:628.70px;font-size:7.42px;line-height:12px;height:12px;color:#222;">Z</span>
<svg class="b" style="left:1252.20px;top:604.00px;" width="6" height="4" viewBox="0 0 6 4"><path d="M0 3.800l3-3.600 3 3.600z" fill="#8a8a8a"/></svg>
<div class="b" style="left:1252.30px;top:612.50px;width:5.80px;height:11.30px;background:#8a8a8a;border-radius:3px;"></div>
<svg class="b" style="left:1252.20px;top:632.00px;" width="6" height="4" viewBox="0 0 6 4"><path d="M0 .2l3 3.600 3-3.600z" fill="#8a8a8a"/></svg>
<div class="b" style="left:0.00px;top:641.40px;width:1280.00px;height:14.60px;background:#f0f0f0;"></div>
<span class="t" style="left:2.00px;top:643.90px;font-size:7.73px;line-height:12px;height:12px;color:#2060c8;letter-spacing:0.001px;text-decoration:underline;text-decoration-color:#7aaee0;text-decoration-thickness:1.200px;">www.oasys-software.com</span>
<span class="t" style="left:100.00px;top:643.90px;font-size:7.73px;line-height:12px;height:12px;color:#555;letter-spacing:-0.243px;">X = 9.5m</span>
<span class="t" style="left:135.20px;top:643.90px;font-size:7.73px;line-height:12px;height:12px;color:#555;letter-spacing:-0.253px;">Y = -0.9m</span>
<span class="t" style="left:172.50px;top:643.90px;font-size:7.73px;line-height:12px;height:12px;color:#555;letter-spacing:-0.176px;">Z = 0.0m</span>
<div class="b" style="left:207.00px;top:643.50px;width:1.00px;height:11.50px;background:#b4b4b4;"></div>
<svg class="b" style="left:591.20px;top:644.50px;" width="9" height="9" viewBox="0 0 9 9"><circle cx="4.500" cy="4.500" r="4.300" fill="#868686"/><path d="M2.700 2.700l3.600 3.600M6.300 2.700l-3.600 3.600" stroke="#fff" stroke-width="1.100"/></svg>
<div class="b" style="left:605.60px;top:643.50px;width:0.80px;height:11.50px;background:#c4c4c4;"></div>
<span class="t" style="left:612.50px;top:643.90px;font-size:7.73px;line-height:12px;height:12px;color:#222;letter-spacing:-0.211px;white-space:pre;">kN  (m, mm, cm)  t  N/mm²  (s, min, day)  °C  m/s²  MJ</span>
<div class="b" style="left:808.40px;top:643.50px;width:0.80px;height:11.50px;background:#c4c4c4;"></div>
<span class="t" style="left:815.00px;top:643.90px;font-size:7.73px;line-height:12px;height:12px;color:#222;letter-spacing:-0.017px;">Steel: &lt;steel generic&gt;, Concrete: &lt;generic concrete&gt;</span>
<div class="b" style="left:1056.50px;top:642.80px;width:89.70px;height:12.80px;background:#f6f6f6;border:1px solid #b4b4b4;box-sizing:border-box;"></div>
<div class="b" style="left:1137.00px;top:643.60px;width:8.60px;height:11.40px;background:#fff;border:1px solid #d8d8d8;box-sizing:border-box;"></div>
<span class="t" style="left:1058.20px;top:643.90px;font-size:7.73px;line-height:12px;height:12px;color:#111;letter-spacing:0.039px;">Global grid</span>
<div class="b" style="left:1147.00px;top:642.80px;width:89.20px;height:12.80px;background:#f6f6f6;border:1px solid #b4b4b4;box-sizing:border-box;"></div>
<div class="b" style="left:1227.50px;top:643.60px;width:8.10px;height:11.40px;background:#fff;border:1px solid #d8d8d8;box-sizing:border-box;"></div>
<span class="t" style="left:1148.80px;top:643.90px;font-size:7.73px;line-height:12px;height:12px;color:#111;letter-spacing:0.051px;">1 : Default grid layout</span>
<svg class="b" style="left:1138.60px;top:647.80px;" width="5.4" height="4" viewBox="0 0 5.400 4"><path d="M.4 .5l2.300 2.500 2.300-2.500" fill="none" stroke="#555" stroke-width=".8"/></svg>
<svg class="b" style="left:1228.90px;top:647.80px;" width="5.4" height="4" viewBox="0 0 5.400 4"><path d="M.4 .5l2.300 2.500 2.300-2.500" fill="none" stroke="#555" stroke-width=".8"/></svg>
<span class="t" style="left:1244.00px;top:643.90px;font-size:7.73px;line-height:12px;height:12px;color:#111;letter-spacing:0.149px;">Modified</span>
</body></html>
